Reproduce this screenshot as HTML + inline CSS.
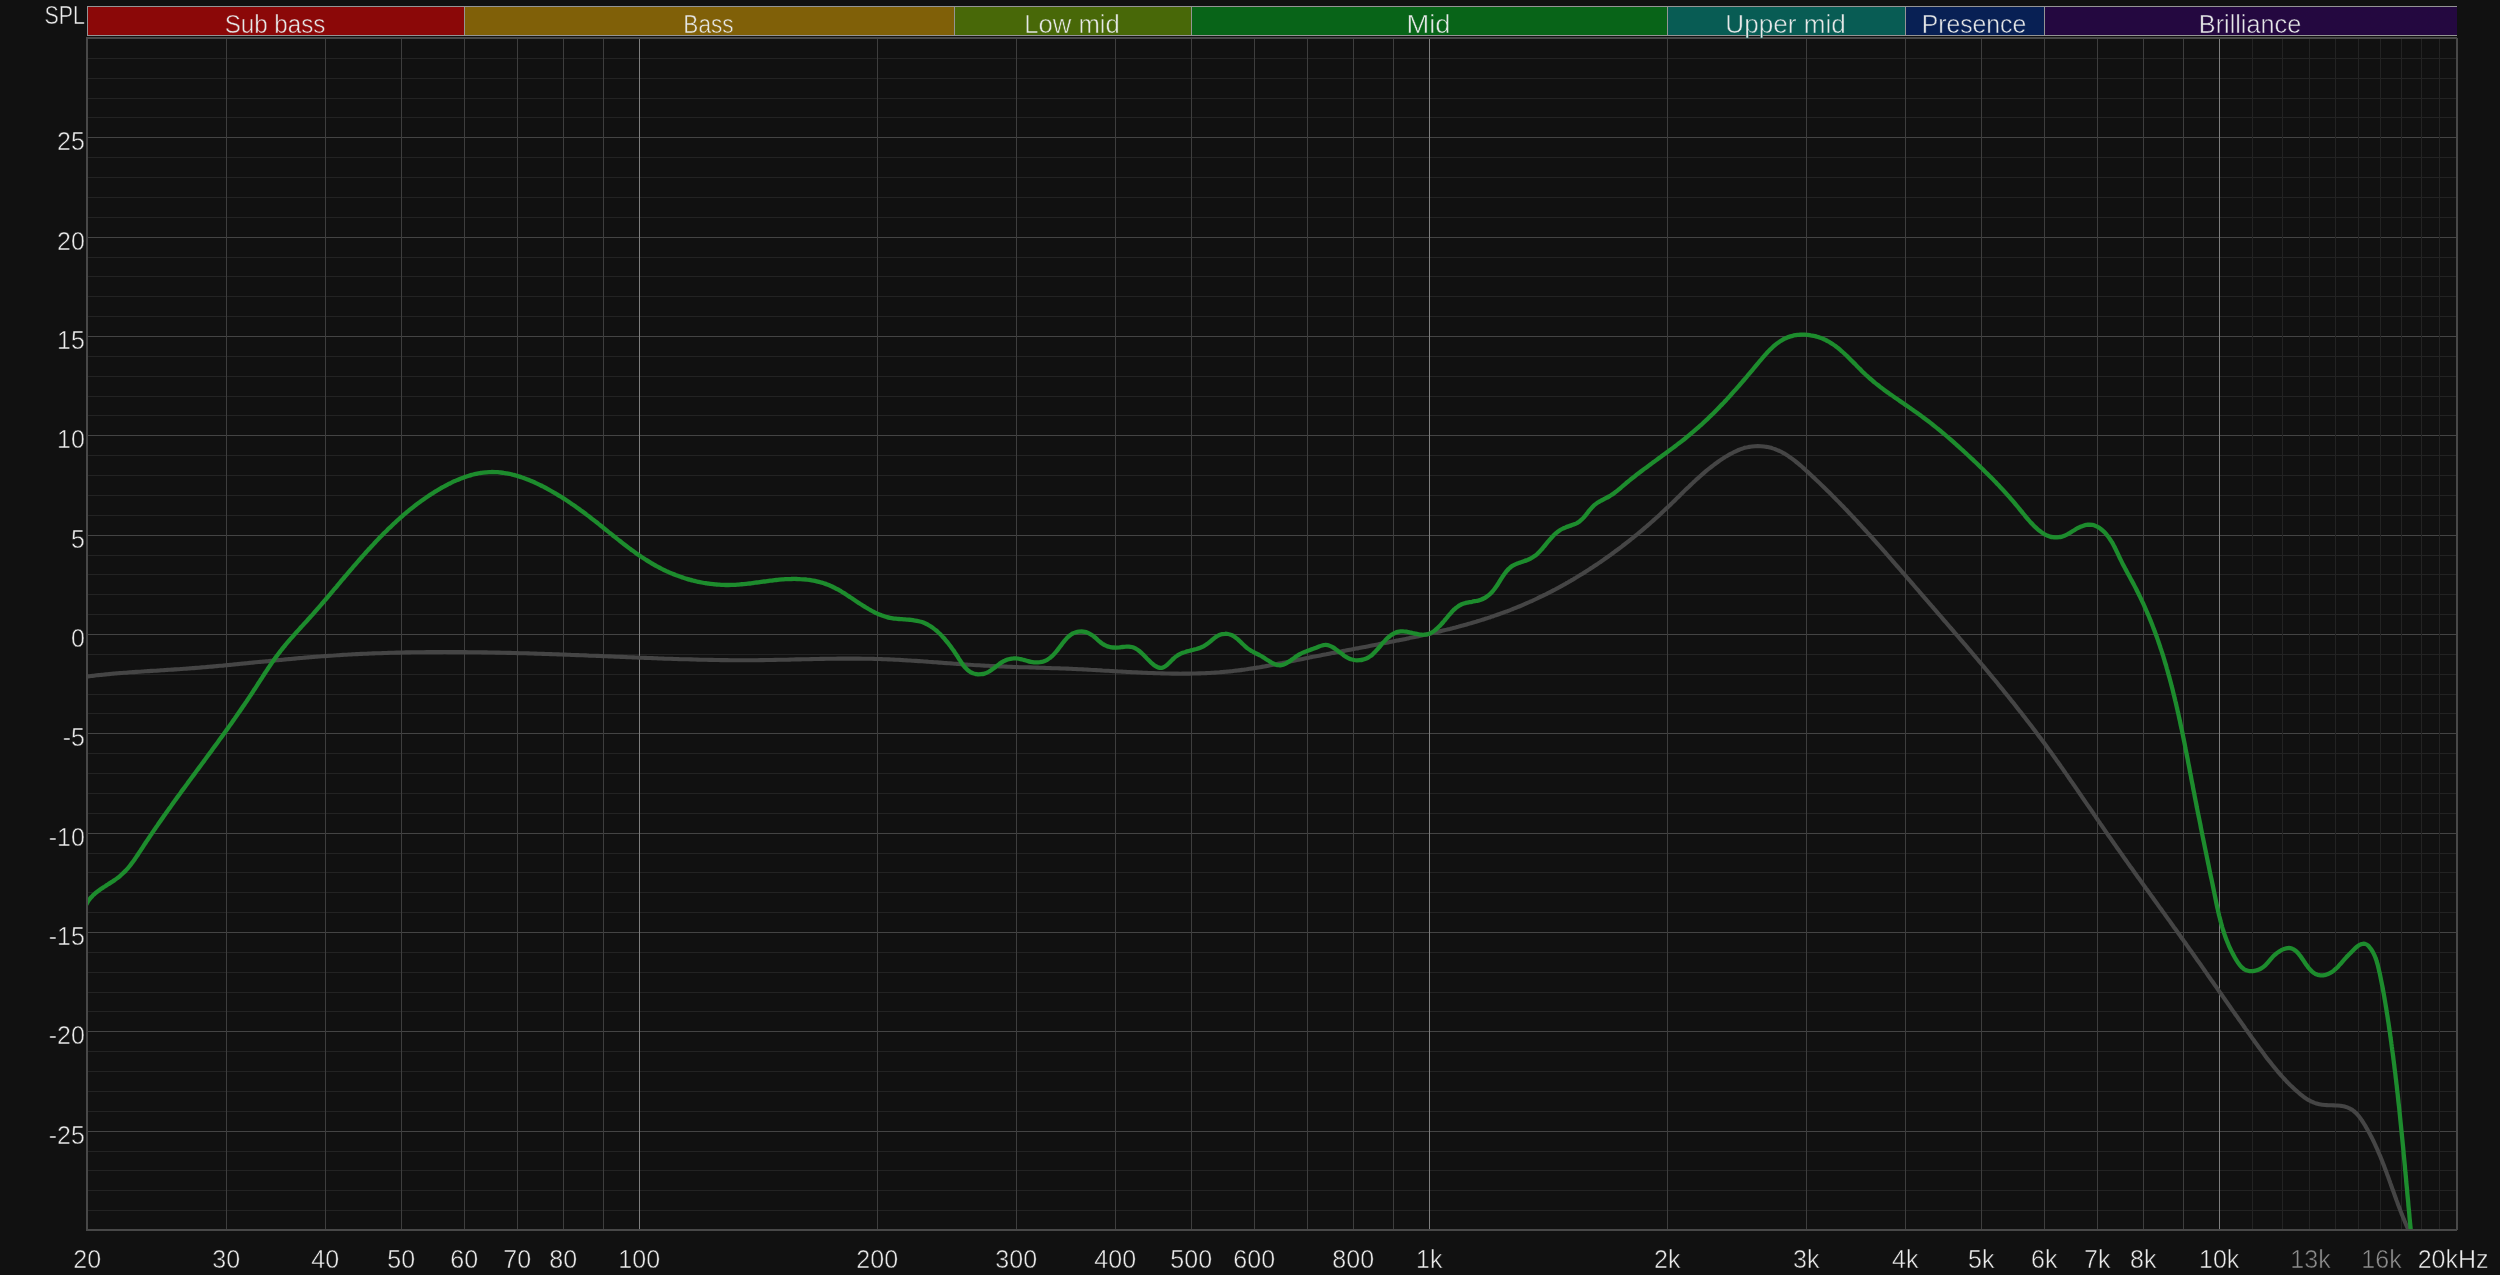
<!DOCTYPE html>
<html lang="en"><head><meta charset="utf-8"><title>SPL frequency response</title>
<style>html,body{margin:0;padding:0;background:#111111;width:2500px;height:1275px}svg{display:block;will-change:transform}text{font-family:"Liberation Sans",sans-serif}</style>
</head><body>
<svg width="2500" height="1275" viewBox="0 0 2500 1275">
<rect x="0" y="0" width="2500" height="1275" fill="#111111"/>
<g shape-rendering="crispEdges">
<rect x="87" y="7" width="377" height="28" fill="#8b0808"/>
<rect x="464" y="7" width="490" height="28" fill="#806008"/>
<rect x="954" y="7" width="237" height="28" fill="#486808"/>
<rect x="1191" y="7" width="476" height="28" fill="#086418"/>
<rect x="1667" y="7" width="238" height="28" fill="#085c54"/>
<rect x="1905" y="7" width="139" height="28" fill="#082054"/>
<rect x="2044" y="7" width="413" height="28" fill="#240840"/>
<rect x="87" y="6" width="2370" height="1" fill="#949494"/>
<rect x="87" y="35" width="2370" height="1" fill="#949494"/>
<rect x="87" y="6" width="1" height="30" fill="#949494"/>
<rect x="464" y="6" width="1" height="30" fill="#949494"/>
<rect x="954" y="6" width="1" height="30" fill="#949494"/>
<rect x="1191" y="6" width="1" height="30" fill="#949494"/>
<rect x="1667" y="6" width="1" height="30" fill="#949494"/>
<rect x="1905" y="6" width="1" height="30" fill="#949494"/>
<rect x="2044" y="6" width="1" height="30" fill="#949494"/>
</g>
<g shape-rendering="crispEdges">
<rect x="88" y="1210" width="2368" height="1" fill="#232323"/>
<rect x="88" y="1190" width="2368" height="1" fill="#232323"/>
<rect x="88" y="1170" width="2368" height="1" fill="#232323"/>
<rect x="88" y="1151" width="2368" height="1" fill="#232323"/>
<rect x="88" y="1111" width="2368" height="1" fill="#232323"/>
<rect x="88" y="1091" width="2368" height="1" fill="#232323"/>
<rect x="88" y="1071" width="2368" height="1" fill="#232323"/>
<rect x="88" y="1051" width="2368" height="1" fill="#232323"/>
<rect x="88" y="1011" width="2368" height="1" fill="#232323"/>
<rect x="88" y="992" width="2368" height="1" fill="#232323"/>
<rect x="88" y="972" width="2368" height="1" fill="#232323"/>
<rect x="88" y="952" width="2368" height="1" fill="#232323"/>
<rect x="88" y="912" width="2368" height="1" fill="#232323"/>
<rect x="88" y="892" width="2368" height="1" fill="#232323"/>
<rect x="88" y="872" width="2368" height="1" fill="#232323"/>
<rect x="88" y="853" width="2368" height="1" fill="#232323"/>
<rect x="88" y="813" width="2368" height="1" fill="#232323"/>
<rect x="88" y="793" width="2368" height="1" fill="#232323"/>
<rect x="88" y="773" width="2368" height="1" fill="#232323"/>
<rect x="88" y="753" width="2368" height="1" fill="#232323"/>
<rect x="88" y="713" width="2368" height="1" fill="#232323"/>
<rect x="88" y="694" width="2368" height="1" fill="#232323"/>
<rect x="88" y="674" width="2368" height="1" fill="#232323"/>
<rect x="88" y="654" width="2368" height="1" fill="#232323"/>
<rect x="88" y="614" width="2368" height="1" fill="#232323"/>
<rect x="88" y="594" width="2368" height="1" fill="#232323"/>
<rect x="88" y="574" width="2368" height="1" fill="#232323"/>
<rect x="88" y="555" width="2368" height="1" fill="#232323"/>
<rect x="88" y="515" width="2368" height="1" fill="#232323"/>
<rect x="88" y="495" width="2368" height="1" fill="#232323"/>
<rect x="88" y="475" width="2368" height="1" fill="#232323"/>
<rect x="88" y="455" width="2368" height="1" fill="#232323"/>
<rect x="88" y="415" width="2368" height="1" fill="#232323"/>
<rect x="88" y="396" width="2368" height="1" fill="#232323"/>
<rect x="88" y="376" width="2368" height="1" fill="#232323"/>
<rect x="88" y="356" width="2368" height="1" fill="#232323"/>
<rect x="88" y="316" width="2368" height="1" fill="#232323"/>
<rect x="88" y="296" width="2368" height="1" fill="#232323"/>
<rect x="88" y="276" width="2368" height="1" fill="#232323"/>
<rect x="88" y="257" width="2368" height="1" fill="#232323"/>
<rect x="88" y="217" width="2368" height="1" fill="#232323"/>
<rect x="88" y="197" width="2368" height="1" fill="#232323"/>
<rect x="88" y="177" width="2368" height="1" fill="#232323"/>
<rect x="88" y="157" width="2368" height="1" fill="#232323"/>
<rect x="88" y="117" width="2368" height="1" fill="#232323"/>
<rect x="88" y="98" width="2368" height="1" fill="#232323"/>
<rect x="88" y="78" width="2368" height="1" fill="#232323"/>
<rect x="88" y="58" width="2368" height="1" fill="#232323"/>
<rect x="88" y="1131" width="2368" height="1" fill="#444444"/>
<rect x="88" y="1031" width="2368" height="1" fill="#444444"/>
<rect x="88" y="932" width="2368" height="1" fill="#444444"/>
<rect x="88" y="833" width="2368" height="1" fill="#444444"/>
<rect x="88" y="733" width="2368" height="1" fill="#444444"/>
<rect x="88" y="634" width="2368" height="1" fill="#444444"/>
<rect x="88" y="535" width="2368" height="1" fill="#444444"/>
<rect x="88" y="435" width="2368" height="1" fill="#444444"/>
<rect x="88" y="336" width="2368" height="1" fill="#444444"/>
<rect x="88" y="237" width="2368" height="1" fill="#444444"/>
<rect x="88" y="137" width="2368" height="1" fill="#444444"/>
<rect x="2252" y="39" width="1" height="1190" fill="#232323"/>
<rect x="2282" y="39" width="1" height="1190" fill="#232323"/>
<rect x="2309" y="39" width="1" height="1190" fill="#232323"/>
<rect x="2335" y="39" width="1" height="1190" fill="#232323"/>
<rect x="2358" y="39" width="1" height="1190" fill="#232323"/>
<rect x="2380" y="39" width="1" height="1190" fill="#232323"/>
<rect x="2401" y="39" width="1" height="1190" fill="#232323"/>
<rect x="2421" y="39" width="1" height="1190" fill="#232323"/>
<rect x="2439" y="39" width="1" height="1190" fill="#232323"/>
<rect x="226" y="39" width="1" height="1190" fill="#3e3e3e"/>
<rect x="325" y="39" width="1" height="1190" fill="#3e3e3e"/>
<rect x="401" y="39" width="1" height="1190" fill="#3e3e3e"/>
<rect x="464" y="39" width="1" height="1190" fill="#3e3e3e"/>
<rect x="517" y="39" width="1" height="1190" fill="#3e3e3e"/>
<rect x="563" y="39" width="1" height="1190" fill="#3e3e3e"/>
<rect x="603" y="39" width="1" height="1190" fill="#3e3e3e"/>
<rect x="877" y="39" width="1" height="1190" fill="#3e3e3e"/>
<rect x="1016" y="39" width="1" height="1190" fill="#3e3e3e"/>
<rect x="1115" y="39" width="1" height="1190" fill="#3e3e3e"/>
<rect x="1191" y="39" width="1" height="1190" fill="#3e3e3e"/>
<rect x="1254" y="39" width="1" height="1190" fill="#3e3e3e"/>
<rect x="1307" y="39" width="1" height="1190" fill="#3e3e3e"/>
<rect x="1353" y="39" width="1" height="1190" fill="#3e3e3e"/>
<rect x="1393" y="39" width="1" height="1190" fill="#3e3e3e"/>
<rect x="1667" y="39" width="1" height="1190" fill="#3e3e3e"/>
<rect x="1806" y="39" width="1" height="1190" fill="#3e3e3e"/>
<rect x="1905" y="39" width="1" height="1190" fill="#3e3e3e"/>
<rect x="1981" y="39" width="1" height="1190" fill="#3e3e3e"/>
<rect x="2044" y="39" width="1" height="1190" fill="#3e3e3e"/>
<rect x="2097" y="39" width="1" height="1190" fill="#3e3e3e"/>
<rect x="2143" y="39" width="1" height="1190" fill="#3e3e3e"/>
<rect x="2183" y="39" width="1" height="1190" fill="#3e3e3e"/>
<rect x="639" y="39" width="1" height="1190" fill="#7e7e7e"/>
<rect x="1429" y="39" width="1" height="1190" fill="#7e7e7e"/>
<rect x="2219" y="39" width="1" height="1190" fill="#7e7e7e"/>
</g>
<defs><clipPath id="plotclip"><rect x="88" y="39" width="2368" height="1190"/></clipPath></defs>
<g clip-path="url(#plotclip)" fill="none" stroke-linejoin="round" stroke-linecap="round">
<path d="M82.0 677.2C82.5 677.1 84.0 676.9 85.0 676.8C86.0 676.6 87.0 676.5 88.0 676.4C89.0 676.3 90.0 676.1 91.0 676.0C92.0 675.9 93.0 675.8 94.0 675.7C95.0 675.5 96.0 675.4 96.9 675.3C97.9 675.2 98.9 675.1 99.9 675.0C100.9 674.9 101.9 674.8 102.9 674.7C103.9 674.6 104.9 674.5 105.9 674.4C106.9 674.3 107.9 674.2 108.9 674.1C109.9 674.0 110.9 673.9 111.9 673.8C112.9 673.7 113.9 673.6 114.9 673.5C115.9 673.4 116.9 673.4 117.9 673.3C118.9 673.2 119.9 673.1 120.9 673.0C121.9 673.0 122.9 672.9 123.9 672.8C124.9 672.7 125.9 672.6 126.9 672.6C127.9 672.5 128.9 672.4 129.9 672.3C130.9 672.3 131.9 672.2 132.9 672.1C133.9 672.1 134.9 672.0 135.9 671.9C136.9 671.9 137.9 671.8 138.9 671.7C139.9 671.7 140.9 671.6 141.9 671.5C142.9 671.5 143.9 671.4 144.9 671.3C145.9 671.3 146.9 671.2 147.9 671.1C148.9 671.1 149.9 671.0 150.9 670.9C151.9 670.9 152.9 670.8 153.9 670.8C154.9 670.7 155.9 670.6 156.8 670.6C157.8 670.5 158.8 670.4 159.8 670.4C160.8 670.3 161.8 670.3 162.8 670.2C163.8 670.1 164.8 670.1 165.8 670.0C166.8 669.9 167.8 669.9 168.8 669.8C169.8 669.8 170.8 669.7 171.8 669.6C172.8 669.6 173.8 669.5 174.8 669.4C175.8 669.4 176.8 669.3 177.8 669.2C178.8 669.2 179.8 669.1 180.8 669.0C181.8 669.0 182.8 668.9 183.8 668.8C184.8 668.7 185.8 668.7 186.8 668.6C187.8 668.5 188.8 668.5 189.8 668.4C190.8 668.3 191.8 668.2 192.8 668.1C193.8 668.1 194.8 668.0 195.8 667.9C196.8 667.8 197.8 667.7 198.8 667.7C199.8 667.6 200.8 667.5 201.8 667.4C202.8 667.3 203.8 667.3 204.8 667.2C205.8 667.1 206.8 667.0 207.8 666.9C208.8 666.8 209.8 666.7 210.8 666.6C211.8 666.6 212.8 666.5 213.8 666.4C214.8 666.3 215.8 666.2 216.8 666.1C217.8 666.0 218.8 665.9 219.8 665.8C220.8 665.7 221.8 665.6 222.8 665.6C223.8 665.5 224.8 665.4 225.8 665.3C226.8 665.2 227.8 665.1 228.8 665.0C229.8 664.9 230.7 664.8 231.7 664.7C232.7 664.6 233.7 664.5 234.7 664.4C235.7 664.3 236.7 664.2 237.7 664.1C238.7 664.0 239.7 663.9 240.7 663.8C241.7 663.7 242.7 663.6 243.7 663.5C244.7 663.4 245.7 663.3 246.7 663.2C247.7 663.1 248.7 663.0 249.7 662.9C250.7 662.8 251.7 662.7 252.7 662.6C253.7 662.5 254.7 662.4 255.7 662.3C256.7 662.2 257.7 662.1 258.7 662.0C259.7 661.9 260.7 661.8 261.7 661.7C262.7 661.6 263.7 661.6 264.7 661.5C265.7 661.4 266.7 661.3 267.7 661.2C268.7 661.1 269.7 661.0 270.7 660.9C271.7 660.8 272.7 660.7 273.7 660.6C274.7 660.5 275.7 660.4 276.7 660.3C277.7 660.2 278.7 660.1 279.7 660.0C280.7 659.9 281.7 659.8 282.7 659.7C283.7 659.6 284.7 659.5 285.7 659.4C286.7 659.3 287.6 659.2 288.6 659.1C289.6 659.0 290.6 658.9 291.6 658.9C292.6 658.8 293.6 658.7 294.6 658.6C295.6 658.5 296.6 658.4 297.6 658.3C298.6 658.2 299.6 658.1 300.6 658.0C301.6 658.0 302.6 657.9 303.6 657.8C304.6 657.7 305.6 657.6 306.6 657.5C307.6 657.4 308.6 657.4 309.6 657.3C310.6 657.2 311.6 657.1 312.6 657.0C313.6 656.9 314.6 656.9 315.6 656.8C316.6 656.7 317.6 656.6 318.6 656.5C319.6 656.5 320.6 656.4 321.6 656.3C322.6 656.2 323.6 656.2 324.6 656.1C325.6 656.0 326.6 655.9 327.6 655.9C328.6 655.8 329.6 655.7 330.6 655.7C331.6 655.6 332.6 655.5 333.6 655.5C334.6 655.4 335.6 655.3 336.6 655.3C337.6 655.2 338.6 655.1 339.6 655.1C340.6 655.0 341.6 655.0 342.6 654.9C343.6 654.8 344.6 654.8 345.6 654.7C346.6 654.7 347.6 654.6 348.6 654.5C349.6 654.5 350.6 654.4 351.6 654.4C352.6 654.3 353.6 654.3 354.6 654.2C355.6 654.2 356.6 654.1 357.6 654.1C358.6 654.0 359.6 654.0 360.6 653.9C361.6 653.9 362.6 653.8 363.6 653.8C364.6 653.7 365.6 653.7 366.6 653.7C367.6 653.6 368.6 653.6 369.6 653.5C370.6 653.5 371.6 653.4 372.6 653.4C373.6 653.4 374.6 653.3 375.6 653.3C376.6 653.2 377.6 653.2 378.6 653.2C379.6 653.1 380.6 653.1 381.6 653.1C382.6 653.0 383.6 653.0 384.6 653.0C385.6 652.9 386.6 652.9 387.6 652.9C388.6 652.8 389.6 652.8 390.6 652.8C391.6 652.8 392.6 652.7 393.6 652.7C394.6 652.7 395.6 652.7 396.6 652.6C397.6 652.6 398.6 652.6 399.6 652.6C400.6 652.5 401.6 652.5 402.6 652.5C403.6 652.5 404.6 652.4 405.6 652.4C406.6 652.4 407.6 652.4 408.6 652.4C409.6 652.4 410.6 652.3 411.6 652.3C412.6 652.3 413.6 652.3 414.6 652.3C415.6 652.3 416.6 652.2 417.6 652.2C418.6 652.2 419.6 652.2 420.6 652.2C421.6 652.2 422.6 652.2 423.6 652.2C424.6 652.1 425.6 652.1 426.6 652.1C427.7 652.1 428.7 652.1 429.7 652.1C430.7 652.1 431.7 652.1 432.7 652.1C433.7 652.1 434.7 652.1 435.7 652.1C436.7 652.1 437.7 652.1 438.7 652.1C439.7 652.1 440.7 652.1 441.7 652.1C442.7 652.0 443.7 652.0 444.7 652.0C445.7 652.0 446.7 652.0 447.7 652.1C448.7 652.1 449.7 652.1 450.7 652.1C451.7 652.1 452.7 652.1 453.7 652.1C454.7 652.1 455.7 652.1 456.7 652.1C457.7 652.1 458.7 652.1 459.7 652.1C460.7 652.1 461.7 652.1 462.7 652.1C463.7 652.1 464.7 652.1 465.7 652.1C466.7 652.2 467.7 652.2 468.7 652.2C469.7 652.2 470.7 652.2 471.7 652.2C472.7 652.2 473.7 652.2 474.7 652.2C475.7 652.3 476.7 652.3 477.7 652.3C478.7 652.3 479.7 652.3 480.7 652.3C481.7 652.3 482.7 652.4 483.7 652.4C484.7 652.4 485.7 652.4 486.8 652.4C487.8 652.4 488.8 652.5 489.8 652.5C490.8 652.5 491.8 652.5 492.8 652.5C493.8 652.5 494.8 652.6 495.8 652.6C496.8 652.6 497.8 652.6 498.8 652.6C499.8 652.7 500.8 652.7 501.8 652.7C502.8 652.7 503.8 652.8 504.8 652.8C505.8 652.8 506.8 652.8 507.8 652.9C508.8 652.9 509.8 652.9 510.8 652.9C511.8 652.9 512.8 653.0 513.8 653.0C514.8 653.0 515.8 653.1 516.8 653.1C517.8 653.1 518.8 653.1 519.8 653.2C520.8 653.2 521.8 653.2 522.8 653.2C523.8 653.3 524.8 653.3 525.8 653.3C526.8 653.4 527.8 653.4 528.8 653.4C529.8 653.4 530.8 653.5 531.8 653.5C532.8 653.5 533.8 653.6 534.8 653.6C535.8 653.6 536.8 653.7 537.9 653.7C538.9 653.7 539.9 653.8 540.9 653.8C541.9 653.8 542.9 653.9 543.9 653.9C544.9 653.9 545.9 654.0 546.9 654.0C547.9 654.0 548.9 654.1 549.9 654.1C550.9 654.1 551.9 654.2 552.9 654.2C553.9 654.2 554.9 654.3 555.9 654.3C556.9 654.3 557.9 654.4 558.9 654.4C559.9 654.4 560.9 654.5 561.9 654.5C562.9 654.6 563.9 654.6 564.9 654.6C565.9 654.7 566.9 654.7 567.9 654.7C568.9 654.8 569.9 654.8 570.9 654.9C571.9 654.9 572.9 654.9 573.9 655.0C574.9 655.0 575.9 655.0 576.9 655.1C577.9 655.1 578.9 655.2 579.9 655.2C580.9 655.2 581.9 655.3 582.9 655.3C583.9 655.4 584.9 655.4 585.9 655.4C586.9 655.5 587.9 655.5 588.9 655.6C589.9 655.6 591.0 655.6 592.0 655.7C593.0 655.7 594.0 655.8 595.0 655.8C596.0 655.8 597.0 655.9 598.0 655.9C599.0 656.0 600.0 656.0 601.0 656.0C602.0 656.1 603.0 656.1 604.0 656.2C605.0 656.2 606.0 656.2 607.0 656.3C608.0 656.3 609.0 656.4 610.0 656.4C611.0 656.5 612.0 656.5 613.0 656.5C614.0 656.6 615.0 656.6 616.0 656.7C617.0 656.7 618.0 656.7 619.0 656.8C620.0 656.8 621.0 656.9 622.0 656.9C623.0 657.0 624.0 657.0 625.0 657.0C626.0 657.1 627.0 657.1 628.0 657.2C629.0 657.2 630.0 657.2 631.0 657.3C632.0 657.3 633.0 657.4 634.0 657.4C635.0 657.4 636.0 657.5 637.0 657.5C638.0 657.6 639.0 657.6 640.0 657.7C641.0 657.7 642.0 657.7 643.0 657.8C644.0 657.8 645.0 657.9 646.0 657.9C647.0 657.9 648.0 658.0 649.0 658.0C650.0 658.0 651.0 658.1 652.0 658.1C653.0 658.2 654.0 658.2 655.0 658.2C656.0 658.3 657.0 658.3 658.0 658.4C659.0 658.4 660.0 658.4 661.0 658.5C662.0 658.5 663.0 658.5 664.1 658.6C665.1 658.6 666.1 658.6 667.1 658.7C668.1 658.7 669.1 658.7 670.1 658.8C671.1 658.8 672.1 658.8 673.1 658.9C674.1 658.9 675.1 658.9 676.1 659.0C677.1 659.0 678.1 659.0 679.1 659.1C680.1 659.1 681.1 659.1 682.1 659.2C683.1 659.2 684.1 659.2 685.1 659.3C686.1 659.3 687.1 659.3 688.1 659.3C689.1 659.4 690.1 659.4 691.1 659.4C692.1 659.5 693.1 659.5 694.1 659.5C695.1 659.5 696.1 659.6 697.1 659.6C698.1 659.6 699.1 659.6 700.1 659.7C701.1 659.7 702.1 659.7 703.1 659.7C704.1 659.7 705.1 659.8 706.1 659.8C707.1 659.8 708.1 659.8 709.1 659.9C710.1 659.9 711.1 659.9 712.1 659.9C713.1 659.9 714.1 659.9 715.1 660.0C716.1 660.0 717.1 660.0 718.1 660.0C719.1 660.0 720.1 660.0 721.1 660.1C722.1 660.1 723.1 660.1 724.1 660.1C725.1 660.1 726.1 660.1 727.1 660.1C728.1 660.1 729.1 660.1 730.1 660.2C731.1 660.2 732.1 660.2 733.1 660.2C734.1 660.2 735.1 660.2 736.1 660.2C737.1 660.2 738.1 660.2 739.1 660.2C740.1 660.2 741.1 660.2 742.1 660.2C743.1 660.2 744.1 660.2 745.2 660.2C746.2 660.2 747.2 660.2 748.2 660.2C749.2 660.2 750.2 660.2 751.2 660.2C752.2 660.2 753.2 660.2 754.2 660.2C755.2 660.2 756.2 660.2 757.2 660.2C758.2 660.1 759.2 660.1 760.2 660.1C761.2 660.1 762.2 660.1 763.2 660.1C764.2 660.1 765.2 660.1 766.2 660.0C767.2 660.0 768.2 660.0 769.2 660.0C770.2 660.0 771.2 660.0 772.2 660.0C773.2 659.9 774.2 659.9 775.2 659.9C776.2 659.9 777.2 659.9 778.2 659.8C779.2 659.8 780.2 659.8 781.2 659.8C782.2 659.8 783.2 659.7 784.2 659.7C785.2 659.7 786.2 659.7 787.2 659.7C788.2 659.6 789.2 659.6 790.2 659.6C791.2 659.6 792.2 659.5 793.2 659.5C794.2 659.5 795.2 659.5 796.2 659.4C797.2 659.4 798.2 659.4 799.2 659.4C800.2 659.4 801.2 659.3 802.2 659.3C803.3 659.3 804.3 659.3 805.3 659.2C806.3 659.2 807.3 659.2 808.3 659.2C809.3 659.1 810.3 659.1 811.3 659.1C812.3 659.1 813.3 659.1 814.3 659.0C815.3 659.0 816.3 659.0 817.3 659.0C818.3 659.0 819.3 658.9 820.3 658.9C821.3 658.9 822.3 658.9 823.3 658.9C824.3 658.8 825.3 658.8 826.3 658.8C827.3 658.8 828.3 658.8 829.3 658.8C830.3 658.7 831.3 658.7 832.3 658.7C833.3 658.7 834.3 658.7 835.3 658.7C836.3 658.7 837.3 658.7 838.3 658.6C839.3 658.6 840.3 658.6 841.3 658.6C842.3 658.6 843.3 658.6 844.3 658.6C845.3 658.6 846.3 658.6 847.3 658.6C848.3 658.6 849.3 658.6 850.3 658.6C851.3 658.6 852.3 658.6 853.3 658.6C854.3 658.6 855.3 658.6 856.4 658.6C857.4 658.6 858.4 658.6 859.4 658.6C860.4 658.6 861.4 658.6 862.4 658.7C863.4 658.7 864.4 658.7 865.4 658.7C866.4 658.7 867.4 658.7 868.4 658.7C869.4 658.8 870.4 658.8 871.4 658.8C872.4 658.8 873.4 658.8 874.4 658.9C875.4 658.9 876.4 658.9 877.4 659.0C878.4 659.0 879.4 659.0 880.4 659.0C881.4 659.1 882.4 659.1 883.4 659.2C884.4 659.2 885.4 659.2 886.4 659.3C887.4 659.3 888.4 659.4 889.4 659.4C890.4 659.4 891.4 659.5 892.4 659.5C893.4 659.6 894.4 659.6 895.4 659.7C896.4 659.7 897.4 659.8 898.4 659.8C899.4 659.9 900.4 659.9 901.4 660.0C902.4 660.1 903.4 660.1 904.4 660.2C905.4 660.2 906.4 660.3 907.4 660.4C908.4 660.4 909.4 660.5 910.4 660.5C911.4 660.6 912.4 660.7 913.4 660.7C914.4 660.8 915.4 660.9 916.4 660.9C917.4 661.0 918.4 661.1 919.4 661.1C920.4 661.2 921.4 661.3 922.4 661.3C923.4 661.4 924.4 661.5 925.4 661.5C926.4 661.6 927.4 661.7 928.4 661.8C929.4 661.8 930.4 661.9 931.4 662.0C932.4 662.1 933.4 662.1 934.4 662.2C935.4 662.3 936.4 662.3 937.4 662.4C938.4 662.5 939.4 662.6 940.4 662.6C941.4 662.7 942.4 662.8 943.4 662.9C944.5 662.9 945.5 663.0 946.5 663.1C947.5 663.2 948.5 663.2 949.5 663.3C950.5 663.4 951.5 663.4 952.5 663.5C953.5 663.6 954.5 663.7 955.5 663.7C956.5 663.8 957.5 663.9 958.5 664.0C959.5 664.0 960.5 664.1 961.5 664.2C962.5 664.2 963.5 664.3 964.5 664.4C965.5 664.4 966.5 664.5 967.5 664.6C968.5 664.6 969.5 664.7 970.5 664.8C971.5 664.8 972.5 664.9 973.5 665.0C974.5 665.0 975.5 665.1 976.5 665.2C977.5 665.2 978.5 665.3 979.5 665.3C980.5 665.4 981.5 665.5 982.5 665.5C983.5 665.6 984.5 665.6 985.5 665.7C986.5 665.7 987.5 665.8 988.5 665.8C989.5 665.9 990.5 666.0 991.5 666.0C992.5 666.1 993.5 666.1 994.5 666.1C995.5 666.2 996.5 666.2 997.5 666.3C998.5 666.3 999.5 666.4 1000.5 666.4C1001.4 666.5 1002.4 666.5 1003.4 666.5C1004.4 666.6 1005.4 666.6 1006.4 666.6C1007.4 666.7 1008.4 666.7 1009.4 666.8C1010.4 666.8 1011.4 666.8 1012.4 666.9C1013.4 666.9 1014.4 666.9 1015.4 667.0C1016.4 667.0 1017.4 667.0 1018.4 667.1C1019.4 667.1 1020.4 667.1 1021.4 667.2C1022.4 667.2 1023.4 667.2 1024.4 667.2C1025.4 667.3 1026.4 667.3 1027.4 667.3C1028.4 667.4 1029.4 667.4 1030.4 667.4C1031.4 667.5 1032.4 667.5 1033.4 667.5C1034.4 667.5 1035.4 667.6 1036.4 667.6C1037.4 667.6 1038.4 667.7 1039.4 667.7C1040.4 667.7 1041.4 667.7 1042.4 667.8C1043.4 667.8 1044.4 667.8 1045.4 667.9C1046.4 667.9 1047.4 667.9 1048.4 668.0C1049.4 668.0 1050.4 668.0 1051.4 668.1C1052.4 668.1 1053.4 668.1 1054.4 668.2C1055.4 668.2 1056.4 668.2 1057.4 668.3C1058.4 668.3 1059.4 668.3 1060.4 668.4C1061.4 668.4 1062.4 668.4 1063.4 668.5C1064.4 668.5 1065.5 668.6 1066.5 668.6C1067.5 668.6 1068.5 668.7 1069.5 668.7C1070.5 668.8 1071.5 668.8 1072.5 668.9C1073.5 668.9 1074.5 669.0 1075.5 669.0C1076.5 669.1 1077.5 669.1 1078.5 669.2C1079.5 669.2 1080.5 669.3 1081.5 669.3C1082.5 669.4 1083.5 669.4 1084.5 669.5C1085.5 669.5 1086.5 669.6 1087.5 669.6C1088.5 669.7 1089.5 669.7 1090.5 669.8C1091.5 669.8 1092.5 669.9 1093.5 670.0C1094.5 670.0 1095.5 670.1 1096.5 670.1C1097.5 670.2 1098.5 670.2 1099.5 670.3C1100.5 670.4 1101.5 670.4 1102.5 670.5C1103.5 670.5 1104.5 670.6 1105.5 670.7C1106.5 670.7 1107.5 670.8 1108.5 670.8C1109.5 670.9 1110.5 671.0 1111.5 671.0C1112.6 671.1 1113.6 671.1 1114.6 671.2C1115.6 671.2 1116.6 671.3 1117.6 671.4C1118.6 671.4 1119.6 671.5 1120.6 671.5C1121.6 671.6 1122.6 671.6 1123.6 671.7C1124.6 671.8 1125.6 671.8 1126.6 671.9C1127.6 671.9 1128.6 672.0 1129.6 672.0C1130.6 672.1 1131.6 672.1 1132.6 672.2C1133.6 672.2 1134.6 672.3 1135.6 672.3C1136.6 672.4 1137.6 672.4 1138.6 672.5C1139.6 672.5 1140.6 672.6 1141.6 672.6C1142.6 672.7 1143.6 672.7 1144.6 672.8C1145.6 672.8 1146.6 672.8 1147.6 672.9C1148.6 672.9 1149.6 673.0 1150.7 673.0C1151.7 673.0 1152.7 673.1 1153.7 673.1C1154.7 673.2 1155.7 673.2 1156.7 673.2C1157.7 673.3 1158.7 673.3 1159.7 673.3C1160.7 673.3 1161.7 673.4 1162.7 673.4C1163.7 673.4 1164.7 673.4 1165.7 673.5C1166.7 673.5 1167.7 673.5 1168.7 673.5C1169.7 673.6 1170.7 673.6 1171.7 673.6C1172.7 673.6 1173.7 673.6 1174.7 673.6C1175.7 673.6 1176.7 673.6 1177.7 673.6C1178.7 673.6 1179.7 673.6 1180.7 673.7C1181.7 673.7 1182.7 673.6 1183.7 673.6C1184.7 673.6 1185.7 673.6 1186.7 673.6C1187.7 673.6 1188.7 673.6 1189.7 673.6C1190.7 673.6 1191.7 673.6 1192.7 673.5C1193.7 673.5 1194.7 673.5 1195.7 673.5C1196.7 673.4 1197.7 673.4 1198.7 673.4C1199.7 673.4 1200.7 673.3 1201.7 673.3C1202.7 673.3 1203.7 673.2 1204.7 673.2C1205.7 673.1 1206.7 673.1 1207.7 673.0C1208.7 673.0 1209.7 672.9 1210.7 672.9C1211.7 672.8 1212.7 672.8 1213.6 672.7C1214.6 672.6 1215.6 672.6 1216.6 672.5C1217.6 672.4 1218.6 672.3 1219.6 672.3C1220.6 672.2 1221.6 672.1 1222.6 672.0C1223.6 671.9 1224.6 671.9 1225.6 671.8C1226.6 671.7 1227.6 671.6 1228.6 671.5C1229.6 671.4 1230.6 671.3 1231.6 671.2C1232.6 671.1 1233.6 670.9 1234.6 670.8C1235.6 670.7 1236.5 670.6 1237.5 670.5C1238.5 670.3 1239.5 670.2 1240.5 670.1C1241.5 670.0 1242.5 669.8 1243.5 669.7C1244.5 669.6 1245.5 669.4 1246.5 669.3C1247.5 669.1 1248.5 669.0 1249.5 668.8C1250.4 668.7 1251.4 668.5 1252.4 668.4C1253.4 668.2 1254.4 668.1 1255.4 667.9C1256.4 667.7 1257.4 667.6 1258.4 667.4C1259.4 667.2 1260.4 667.1 1261.3 666.9C1262.3 666.7 1263.3 666.6 1264.3 666.4C1265.3 666.2 1266.3 666.0 1267.3 665.9C1268.3 665.7 1269.3 665.5 1270.3 665.3C1271.2 665.1 1272.2 664.9 1273.2 664.8C1274.2 664.6 1275.2 664.4 1276.2 664.2C1277.2 664.0 1278.2 663.8 1279.1 663.6C1280.1 663.4 1281.1 663.2 1282.1 663.1C1283.1 662.9 1284.1 662.7 1285.1 662.5C1286.1 662.3 1287.0 662.1 1288.0 661.9C1289.0 661.7 1290.0 661.5 1291.0 661.3C1292.0 661.1 1293.0 660.9 1293.9 660.7C1294.9 660.5 1295.9 660.3 1296.9 660.1C1297.9 659.9 1298.9 659.7 1299.8 659.5C1300.8 659.3 1301.8 659.1 1302.8 658.9C1303.8 658.7 1304.8 658.5 1305.7 658.3C1306.7 658.1 1307.7 657.9 1308.7 657.7C1309.7 657.5 1310.7 657.3 1311.6 657.1C1312.6 657.0 1313.6 656.8 1314.6 656.6C1315.6 656.4 1316.5 656.2 1317.5 656.0C1318.5 655.8 1319.5 655.6 1320.5 655.4C1321.5 655.2 1322.4 655.0 1323.4 654.8C1324.4 654.6 1325.4 654.4 1326.4 654.3C1327.3 654.1 1328.3 653.9 1329.3 653.7C1330.3 653.5 1331.3 653.3 1332.2 653.1C1333.2 652.9 1334.2 652.7 1335.2 652.6C1336.2 652.4 1337.1 652.2 1338.1 652.0C1339.1 651.8 1340.1 651.6 1341.1 651.4C1342.0 651.2 1343.0 651.0 1344.0 650.9C1345.0 650.7 1346.0 650.5 1346.9 650.3C1347.9 650.1 1348.9 649.9 1349.9 649.7C1350.9 649.5 1351.8 649.4 1352.8 649.2C1353.8 649.0 1354.8 648.8 1355.8 648.6C1356.7 648.4 1357.7 648.2 1358.7 648.1C1359.7 647.9 1360.7 647.7 1361.6 647.5C1362.6 647.3 1363.6 647.1 1364.6 646.9C1365.6 646.7 1366.5 646.6 1367.5 646.4C1368.5 646.2 1369.5 646.0 1370.5 645.8C1371.5 645.6 1372.4 645.4 1373.4 645.2C1374.4 645.1 1375.4 644.9 1376.4 644.7C1377.4 644.5 1378.3 644.3 1379.3 644.1C1380.3 643.9 1381.3 643.7 1382.3 643.5C1383.3 643.4 1384.2 643.2 1385.2 643.0C1386.2 642.8 1387.2 642.6 1388.2 642.4C1389.2 642.2 1390.1 642.0 1391.1 641.8C1392.1 641.6 1393.1 641.4 1394.1 641.2C1395.1 641.0 1396.1 640.8 1397.0 640.6C1398.0 640.4 1399.0 640.3 1400.0 640.1C1401.0 639.9 1402.0 639.7 1402.9 639.5C1403.9 639.3 1404.9 639.1 1405.9 638.9C1406.9 638.7 1407.9 638.4 1408.9 638.2C1409.8 638.0 1410.8 637.8 1411.8 637.6C1412.8 637.4 1413.8 637.2 1414.8 637.0C1415.7 636.8 1416.7 636.6 1417.7 636.4C1418.7 636.2 1419.7 636.0 1420.6 635.7C1421.6 635.5 1422.6 635.3 1423.6 635.1C1424.6 634.9 1425.6 634.7 1426.5 634.4C1427.5 634.2 1428.5 634.0 1429.5 633.8C1430.5 633.6 1431.4 633.3 1432.4 633.1C1433.4 632.9 1434.4 632.7 1435.4 632.4C1436.3 632.2 1437.3 632.0 1438.3 631.7C1439.3 631.5 1440.2 631.3 1441.2 631.0C1442.2 630.8 1443.2 630.6 1444.1 630.3C1445.1 630.1 1446.1 629.9 1447.1 629.6C1448.0 629.4 1449.0 629.1 1450.0 628.9C1451.0 628.6 1451.9 628.4 1452.9 628.1C1453.9 627.9 1454.8 627.6 1455.8 627.4C1456.8 627.1 1457.8 626.9 1458.7 626.6C1459.7 626.4 1460.7 626.1 1461.6 625.8C1462.6 625.6 1463.6 625.3 1464.5 625.0C1465.5 624.8 1466.5 624.5 1467.4 624.2C1468.4 623.9 1469.4 623.7 1470.3 623.4C1471.3 623.1 1472.2 622.8 1473.2 622.5C1474.2 622.3 1475.1 622.0 1476.1 621.7C1477.0 621.4 1478.0 621.1 1479.0 620.8C1479.9 620.5 1480.9 620.2 1481.8 619.9C1482.8 619.6 1483.7 619.3 1484.7 619.0C1485.6 618.7 1486.6 618.4 1487.5 618.1C1488.5 617.8 1489.4 617.5 1490.4 617.2C1491.3 616.9 1492.3 616.5 1493.2 616.2C1494.2 615.9 1495.1 615.6 1496.1 615.2C1497.0 614.9 1498.0 614.6 1498.9 614.2C1499.9 613.9 1500.8 613.6 1501.7 613.2C1502.7 612.9 1503.6 612.6 1504.5 612.2C1505.5 611.9 1506.4 611.5 1507.4 611.2C1508.3 610.8 1509.2 610.4 1510.2 610.1C1511.1 609.7 1512.0 609.4 1513.0 609.0C1513.9 608.6 1514.8 608.3 1515.7 607.9C1516.7 607.5 1517.6 607.1 1518.5 606.7C1519.4 606.4 1520.4 606.0 1521.3 605.6C1522.2 605.2 1523.1 604.8 1524.0 604.4C1525.0 604.0 1525.9 603.6 1526.8 603.2C1527.7 602.8 1528.6 602.4 1529.5 602.0C1530.4 601.6 1531.4 601.2 1532.3 600.8C1533.2 600.3 1534.1 599.9 1535.0 599.5C1535.9 599.1 1536.8 598.7 1537.7 598.2C1538.6 597.8 1539.5 597.4 1540.4 596.9C1541.3 596.5 1542.2 596.1 1543.1 595.6C1544.0 595.2 1544.9 594.7 1545.8 594.3C1546.7 593.8 1547.6 593.4 1548.5 592.9C1549.4 592.5 1550.3 592.0 1551.2 591.5C1552.1 591.1 1552.9 590.6 1553.8 590.2C1554.7 589.7 1555.6 589.2 1556.5 588.7C1557.4 588.3 1558.2 587.8 1559.1 587.3C1560.0 586.8 1560.9 586.4 1561.8 585.9C1562.6 585.4 1563.5 584.9 1564.4 584.4C1565.3 583.9 1566.1 583.4 1567.0 582.9C1567.9 582.4 1568.7 581.9 1569.6 581.4C1570.5 580.9 1571.3 580.4 1572.2 579.9C1573.1 579.4 1573.9 578.9 1574.8 578.4C1575.7 577.9 1576.5 577.3 1577.4 576.8C1578.2 576.3 1579.1 575.8 1579.9 575.3C1580.8 574.7 1581.7 574.2 1582.5 573.7C1583.4 573.1 1584.2 572.6 1585.1 572.1C1585.9 571.5 1586.7 571.0 1587.6 570.5C1588.4 569.9 1589.3 569.4 1590.1 568.8C1591.0 568.3 1591.8 567.7 1592.6 567.2C1593.5 566.6 1594.3 566.1 1595.1 565.5C1596.0 565.0 1596.8 564.4 1597.6 563.9C1598.5 563.3 1599.3 562.7 1600.1 562.2C1601.0 561.6 1601.8 561.0 1602.6 560.5C1603.4 559.9 1604.3 559.3 1605.1 558.7C1605.9 558.2 1606.7 557.6 1607.5 557.0C1608.4 556.4 1609.2 555.8 1610.0 555.3C1610.8 554.7 1611.6 554.1 1612.4 553.5C1613.2 552.9 1614.0 552.3 1614.8 551.7C1615.6 551.1 1616.5 550.5 1617.3 549.9C1618.1 549.3 1618.9 548.7 1619.7 548.1C1620.5 547.5 1621.3 546.9 1622.1 546.3C1622.8 545.7 1623.6 545.1 1624.4 544.5C1625.2 543.9 1626.0 543.3 1626.8 542.6C1627.6 542.0 1628.4 541.4 1629.2 540.8C1630.0 540.2 1630.7 539.5 1631.5 538.9C1632.3 538.3 1633.1 537.7 1633.9 537.0C1634.6 536.4 1635.4 535.8 1636.2 535.1C1637.0 534.5 1637.7 533.9 1638.5 533.2C1639.3 532.6 1640.0 532.0 1640.8 531.3C1641.6 530.7 1642.4 530.0 1643.1 529.4C1643.9 528.7 1644.6 528.1 1645.4 527.4C1646.2 526.8 1646.9 526.1 1647.7 525.5C1648.4 524.8 1649.2 524.2 1649.9 523.5C1650.7 522.8 1651.4 522.2 1652.2 521.5C1652.9 520.9 1653.7 520.2 1654.4 519.5C1655.2 518.8 1655.9 518.2 1656.7 517.5C1657.4 516.8 1658.2 516.2 1658.9 515.5C1659.6 514.8 1660.4 514.1 1661.1 513.4C1661.8 512.8 1662.6 512.1 1663.3 511.4C1664.0 510.7 1664.8 510.0 1665.5 509.3C1666.2 508.6 1667.0 508.0 1667.7 507.3C1668.4 506.6 1669.1 505.9 1669.9 505.2C1670.6 504.5 1671.3 503.8 1672.0 503.1C1672.7 502.4 1673.5 501.7 1674.2 501.0C1674.9 500.3 1675.6 499.6 1676.3 498.9C1677.0 498.2 1677.8 497.5 1678.5 496.8C1679.2 496.1 1679.9 495.4 1680.6 494.6C1681.3 493.9 1682.1 493.2 1682.8 492.5C1683.5 491.8 1684.2 491.1 1684.9 490.4C1685.6 489.7 1686.4 489.0 1687.1 488.3C1687.8 487.6 1688.5 486.9 1689.3 486.3C1690.0 485.6 1690.7 484.9 1691.4 484.2C1692.2 483.5 1692.9 482.8 1693.6 482.1C1694.4 481.4 1695.1 480.8 1695.8 480.1C1696.6 479.4 1697.3 478.7 1698.0 478.1C1698.8 477.4 1699.5 476.7 1700.3 476.1C1701.0 475.4 1701.8 474.7 1702.5 474.1C1703.3 473.4 1704.0 472.8 1704.8 472.1C1705.6 471.5 1706.3 470.8 1707.1 470.2C1707.9 469.6 1708.7 468.9 1709.4 468.3C1710.2 467.7 1711.0 467.1 1711.8 466.5C1712.6 465.9 1713.4 465.2 1714.2 464.6C1715.0 464.0 1715.8 463.5 1716.6 462.9C1717.4 462.3 1718.2 461.7 1719.0 461.1C1719.9 460.6 1720.7 460.0 1721.5 459.4C1722.4 458.9 1723.2 458.3 1724.1 457.8C1724.9 457.2 1725.8 456.7 1726.6 456.2C1727.5 455.7 1728.4 455.1 1729.2 454.6C1730.1 454.1 1731.0 453.7 1731.9 453.2C1732.8 452.7 1733.7 452.3 1734.6 451.8C1735.5 451.4 1736.4 451.0 1737.3 450.6C1738.2 450.2 1739.2 449.8 1740.1 449.4C1741.1 449.1 1742.0 448.7 1743.0 448.4C1743.9 448.1 1744.9 447.8 1745.8 447.6C1746.8 447.3 1747.8 447.1 1748.8 446.9C1749.8 446.8 1750.8 446.6 1751.8 446.5C1752.8 446.4 1753.8 446.3 1754.8 446.2C1755.9 446.1 1756.9 446.1 1757.9 446.1C1758.9 446.1 1759.9 446.1 1760.9 446.2C1762.0 446.3 1763.0 446.4 1764.0 446.5C1765.0 446.6 1766.0 446.8 1767.0 446.9C1767.9 447.1 1768.9 447.3 1769.9 447.6C1770.8 447.8 1771.8 448.1 1772.7 448.4C1773.7 448.7 1774.6 449.0 1775.5 449.3C1776.4 449.7 1777.3 450.1 1778.2 450.5C1779.1 450.8 1780.0 451.3 1780.9 451.7C1781.8 452.1 1782.6 452.6 1783.5 453.1C1784.3 453.6 1785.2 454.1 1786.0 454.6C1786.8 455.1 1787.7 455.6 1788.5 456.2C1789.3 456.7 1790.1 457.3 1790.9 457.9C1791.7 458.5 1792.5 459.1 1793.3 459.7C1794.1 460.3 1794.9 460.9 1795.7 461.5C1796.5 462.1 1797.3 462.8 1798.0 463.4C1798.8 464.1 1799.6 464.7 1800.3 465.4C1801.1 466.0 1801.9 466.7 1802.6 467.4C1803.4 468.1 1804.1 468.7 1804.9 469.4C1805.6 470.1 1806.4 470.8 1807.1 471.5C1807.9 472.1 1808.6 472.8 1809.4 473.5C1810.1 474.2 1810.9 474.9 1811.6 475.6C1812.3 476.3 1813.1 476.9 1813.8 477.6C1814.6 478.3 1815.3 479.0 1816.0 479.7C1816.8 480.4 1817.5 481.1 1818.2 481.8C1819.0 482.5 1819.7 483.2 1820.4 483.9C1821.1 484.6 1821.9 485.3 1822.6 486.0C1823.3 486.7 1824.0 487.4 1824.8 488.1C1825.5 488.8 1826.2 489.5 1826.9 490.2C1827.6 490.9 1828.4 491.6 1829.1 492.3C1829.8 493.0 1830.5 493.7 1831.2 494.4C1831.9 495.2 1832.6 495.9 1833.3 496.6C1834.1 497.3 1834.8 498.0 1835.5 498.7C1836.2 499.4 1836.9 500.2 1837.6 500.9C1838.3 501.6 1839.0 502.3 1839.7 503.0C1840.4 503.7 1841.1 504.5 1841.8 505.2C1842.5 505.9 1843.2 506.6 1843.9 507.3C1844.6 508.1 1845.3 508.8 1846.0 509.5C1846.7 510.2 1847.4 511.0 1848.0 511.7C1848.7 512.4 1849.4 513.1 1850.1 513.9C1850.8 514.6 1851.5 515.3 1852.2 516.1C1852.9 516.8 1853.6 517.5 1854.2 518.3C1854.9 519.0 1855.6 519.7 1856.3 520.4C1857.0 521.2 1857.7 521.9 1858.3 522.7C1859.0 523.4 1859.7 524.1 1860.4 524.9C1861.1 525.6 1861.7 526.3 1862.4 527.1C1863.1 527.8 1863.8 528.5 1864.4 529.3C1865.1 530.0 1865.8 530.8 1866.5 531.5C1867.1 532.2 1867.8 533.0 1868.5 533.7C1869.1 534.5 1869.8 535.2 1870.5 536.0C1871.2 536.7 1871.8 537.4 1872.5 538.2C1873.2 538.9 1873.8 539.7 1874.5 540.4C1875.2 541.2 1875.8 541.9 1876.5 542.7C1877.2 543.4 1877.8 544.1 1878.5 544.9C1879.2 545.6 1879.8 546.4 1880.5 547.1C1881.2 547.9 1881.8 548.6 1882.5 549.4C1883.1 550.1 1883.8 550.9 1884.5 551.6C1885.1 552.4 1885.8 553.1 1886.5 553.9C1887.1 554.6 1887.8 555.4 1888.4 556.1C1889.1 556.9 1889.8 557.6 1890.4 558.4C1891.1 559.1 1891.7 559.9 1892.4 560.7C1893.1 561.4 1893.7 562.2 1894.4 562.9C1895.0 563.7 1895.7 564.4 1896.3 565.2C1897.0 565.9 1897.7 566.7 1898.3 567.4C1899.0 568.2 1899.6 568.9 1900.3 569.7C1900.9 570.5 1901.6 571.2 1902.2 572.0C1902.9 572.7 1903.6 573.5 1904.2 574.2C1904.9 575.0 1905.5 575.8 1906.2 576.5C1906.8 577.3 1907.5 578.0 1908.1 578.8C1908.8 579.5 1909.5 580.3 1910.1 581.0C1910.8 581.8 1911.4 582.6 1912.1 583.3C1912.7 584.1 1913.4 584.8 1914.0 585.6C1914.7 586.3 1915.3 587.1 1916.0 587.9C1916.7 588.6 1917.3 589.4 1918.0 590.1C1918.6 590.9 1919.3 591.6 1919.9 592.4C1920.6 593.2 1921.2 593.9 1921.9 594.7C1922.6 595.4 1923.2 596.2 1923.9 596.9C1924.5 597.7 1925.2 598.5 1925.8 599.2C1926.5 600.0 1927.1 600.7 1927.8 601.5C1928.5 602.2 1929.1 603.0 1929.8 603.8C1930.4 604.5 1931.1 605.3 1931.7 606.0C1932.4 606.8 1933.1 607.5 1933.7 608.3C1934.4 609.1 1935.0 609.8 1935.7 610.6C1936.3 611.3 1937.0 612.1 1937.6 612.8C1938.3 613.6 1939.0 614.4 1939.6 615.1C1940.3 615.9 1940.9 616.6 1941.6 617.4C1942.2 618.1 1942.9 618.9 1943.5 619.7C1944.2 620.4 1944.9 621.2 1945.5 621.9C1946.2 622.7 1946.8 623.5 1947.5 624.2C1948.1 625.0 1948.8 625.7 1949.4 626.5C1950.1 627.3 1950.8 628.0 1951.4 628.8C1952.1 629.5 1952.7 630.3 1953.4 631.0C1954.0 631.8 1954.7 632.6 1955.3 633.3C1956.0 634.1 1956.6 634.8 1957.3 635.6C1957.9 636.4 1958.6 637.1 1959.3 637.9C1959.9 638.7 1960.6 639.4 1961.2 640.2C1961.9 640.9 1962.5 641.7 1963.2 642.5C1963.8 643.2 1964.5 644.0 1965.1 644.7C1965.8 645.5 1966.4 646.3 1967.1 647.0C1967.7 647.8 1968.4 648.6 1969.0 649.3C1969.7 650.1 1970.3 650.9 1971.0 651.6C1971.6 652.4 1972.3 653.1 1972.9 653.9C1973.6 654.7 1974.2 655.4 1974.9 656.2C1975.5 657.0 1976.2 657.7 1976.8 658.5C1977.5 659.3 1978.1 660.0 1978.7 660.8C1979.4 661.6 1980.0 662.3 1980.7 663.1C1981.3 663.9 1982.0 664.6 1982.6 665.4C1983.3 666.2 1983.9 666.9 1984.5 667.7C1985.2 668.5 1985.8 669.3 1986.5 670.0C1987.1 670.8 1987.8 671.6 1988.4 672.3C1989.0 673.1 1989.7 673.9 1990.3 674.6C1991.0 675.4 1991.6 676.2 1992.2 677.0C1992.9 677.7 1993.5 678.5 1994.2 679.3C1994.8 680.1 1995.4 680.8 1996.1 681.6C1996.7 682.4 1997.3 683.1 1998.0 683.9C1998.6 684.7 1999.2 685.5 1999.9 686.2C2000.5 687.0 2001.1 687.8 2001.8 688.6C2002.4 689.4 2003.0 690.1 2003.7 690.9C2004.3 691.7 2004.9 692.5 2005.6 693.2C2006.2 694.0 2006.8 694.8 2007.5 695.6C2008.1 696.4 2008.7 697.1 2009.3 697.9C2010.0 698.7 2010.6 699.5 2011.2 700.3C2011.9 701.1 2012.5 701.8 2013.1 702.6C2013.7 703.4 2014.3 704.2 2015.0 705.0C2015.6 705.8 2016.2 706.5 2016.8 707.3C2017.5 708.1 2018.1 708.9 2018.7 709.7C2019.3 710.5 2019.9 711.3 2020.6 712.0C2021.2 712.8 2021.8 713.6 2022.4 714.4C2023.0 715.2 2023.6 716.0 2024.3 716.8C2024.9 717.6 2025.5 718.4 2026.1 719.2C2026.7 720.0 2027.3 720.7 2027.9 721.5C2028.5 722.3 2029.2 723.1 2029.8 723.9C2030.4 724.7 2031.0 725.5 2031.6 726.3C2032.2 727.1 2032.8 727.9 2033.4 728.7C2034.0 729.5 2034.6 730.3 2035.2 731.1C2035.8 731.9 2036.4 732.7 2037.0 733.5C2037.6 734.3 2038.2 735.1 2038.8 735.9C2039.4 736.7 2040.0 737.5 2040.6 738.3C2041.2 739.1 2041.8 739.9 2042.4 740.7C2043.0 741.5 2043.6 742.3 2044.2 743.1C2044.8 743.9 2045.4 744.7 2046.0 745.6C2046.6 746.4 2047.2 747.2 2047.7 748.0C2048.3 748.8 2048.9 749.6 2049.5 750.4C2050.1 751.2 2050.7 752.0 2051.3 752.8C2051.9 753.7 2052.4 754.5 2053.0 755.3C2053.6 756.1 2054.2 756.9 2054.8 757.7C2055.4 758.5 2055.9 759.4 2056.5 760.2C2057.1 761.0 2057.7 761.8 2058.3 762.6C2058.8 763.4 2059.4 764.3 2060.0 765.1C2060.6 765.9 2061.1 766.7 2061.7 767.5C2062.3 768.3 2062.9 769.2 2063.4 770.0C2064.0 770.8 2064.6 771.6 2065.2 772.5C2065.7 773.3 2066.3 774.1 2066.9 774.9C2067.5 775.7 2068.0 776.6 2068.6 777.4C2069.2 778.2 2069.7 779.0 2070.3 779.9C2070.9 780.7 2071.5 781.5 2072.0 782.3C2072.6 783.1 2073.2 784.0 2073.7 784.8C2074.3 785.6 2074.9 786.4 2075.4 787.3C2076.0 788.1 2076.6 788.9 2077.1 789.7C2077.7 790.6 2078.3 791.4 2078.8 792.2C2079.4 793.1 2080.0 793.9 2080.5 794.7C2081.1 795.5 2081.7 796.4 2082.2 797.2C2082.8 798.0 2083.4 798.8 2083.9 799.7C2084.5 800.5 2085.1 801.3 2085.6 802.1C2086.2 803.0 2086.8 803.8 2087.3 804.6C2087.9 805.5 2088.5 806.3 2089.0 807.1C2089.6 807.9 2090.2 808.8 2090.7 809.6C2091.3 810.4 2091.9 811.2 2092.4 812.1C2093.0 812.9 2093.6 813.7 2094.1 814.6C2094.7 815.4 2095.3 816.2 2095.8 817.0C2096.4 817.9 2096.9 818.7 2097.5 819.5C2098.1 820.3 2098.6 821.2 2099.2 822.0C2099.8 822.8 2100.3 823.7 2100.9 824.5C2101.5 825.3 2102.1 826.1 2102.6 827.0C2103.2 827.8 2103.8 828.6 2104.3 829.4C2104.9 830.3 2105.5 831.1 2106.0 831.9C2106.6 832.7 2107.2 833.6 2107.7 834.4C2108.3 835.2 2108.9 836.0 2109.5 836.9C2110.0 837.7 2110.6 838.5 2111.2 839.3C2111.7 840.2 2112.3 841.0 2112.9 841.8C2113.5 842.6 2114.0 843.4 2114.6 844.3C2115.2 845.1 2115.8 845.9 2116.3 846.7C2116.9 847.5 2117.5 848.4 2118.1 849.2C2118.6 850.0 2119.2 850.8 2119.8 851.6C2120.4 852.5 2121.0 853.3 2121.5 854.1C2122.1 854.9 2122.7 855.7 2123.3 856.6C2123.8 857.4 2124.4 858.2 2125.0 859.0C2125.6 859.8 2126.2 860.7 2126.8 861.5C2127.3 862.3 2127.9 863.1 2128.5 863.9C2129.1 864.7 2129.7 865.6 2130.2 866.4C2130.8 867.2 2131.4 868.0 2132.0 868.8C2132.6 869.6 2133.2 870.4 2133.7 871.3C2134.3 872.1 2134.9 872.9 2135.5 873.7C2136.1 874.5 2136.7 875.3 2137.2 876.2C2137.8 877.0 2138.4 877.8 2139.0 878.6C2139.6 879.4 2140.2 880.2 2140.8 881.0C2141.3 881.9 2141.9 882.7 2142.5 883.5C2143.1 884.3 2143.7 885.1 2144.3 885.9C2144.9 886.7 2145.4 887.5 2146.0 888.4C2146.6 889.2 2147.2 890.0 2147.8 890.8C2148.4 891.6 2149.0 892.4 2149.5 893.2C2150.1 894.1 2150.7 894.9 2151.3 895.7C2151.9 896.5 2152.5 897.3 2153.1 898.1C2153.6 898.9 2154.2 899.7 2154.8 900.6C2155.4 901.4 2156.0 902.2 2156.6 903.0C2157.2 903.8 2157.8 904.6 2158.3 905.4C2158.9 906.2 2159.5 907.1 2160.1 907.9C2160.7 908.7 2161.3 909.5 2161.9 910.3C2162.4 911.1 2163.0 911.9 2163.6 912.7C2164.2 913.6 2164.8 914.4 2165.4 915.2C2166.0 916.0 2166.5 916.8 2167.1 917.6C2167.7 918.4 2168.3 919.2 2168.9 920.1C2169.5 920.9 2170.1 921.7 2170.6 922.5C2171.2 923.3 2171.8 924.1 2172.4 924.9C2173.0 925.8 2173.6 926.6 2174.1 927.4C2174.7 928.2 2175.3 929.0 2175.9 929.8C2176.5 930.6 2177.1 931.4 2177.6 932.3C2178.2 933.1 2178.8 933.9 2179.4 934.7C2180.0 935.5 2180.6 936.3 2181.1 937.2C2181.7 938.0 2182.3 938.8 2182.9 939.6C2183.5 940.4 2184.0 941.2 2184.6 942.0C2185.2 942.9 2185.8 943.7 2186.4 944.5C2186.9 945.3 2187.5 946.1 2188.1 946.9C2188.7 947.8 2189.2 948.6 2189.8 949.4C2190.4 950.2 2191.0 951.0 2191.6 951.8C2192.1 952.7 2192.7 953.5 2193.3 954.3C2193.9 955.1 2194.4 955.9 2195.0 956.7C2195.6 957.6 2196.2 958.4 2196.7 959.2C2197.3 960.0 2197.9 960.8 2198.5 961.7C2199.0 962.5 2199.6 963.3 2200.2 964.1C2200.8 964.9 2201.3 965.7 2201.9 966.6C2202.5 967.4 2203.1 968.2 2203.6 969.0C2204.2 969.8 2204.8 970.7 2205.4 971.5C2205.9 972.3 2206.5 973.1 2207.1 973.9C2207.7 974.8 2208.2 975.6 2208.8 976.4C2209.4 977.2 2210.0 978.0 2210.5 978.9C2211.1 979.7 2211.7 980.5 2212.2 981.3C2212.8 982.1 2213.4 983.0 2214.0 983.8C2214.5 984.6 2215.1 985.4 2215.7 986.2C2216.3 987.1 2216.8 987.9 2217.4 988.7C2218.0 989.5 2218.6 990.3 2219.1 991.2C2219.7 992.0 2220.3 992.8 2220.9 993.6C2221.4 994.4 2222.0 995.3 2222.6 996.1C2223.1 996.9 2223.7 997.7 2224.3 998.5C2224.9 999.4 2225.4 1000.2 2226.0 1001.0C2226.6 1001.8 2227.2 1002.6 2227.7 1003.5C2228.3 1004.3 2228.9 1005.1 2229.5 1005.9C2230.1 1006.7 2230.6 1007.6 2231.2 1008.4C2231.8 1009.2 2232.4 1010.0 2232.9 1010.8C2233.5 1011.7 2234.1 1012.5 2234.7 1013.3C2235.2 1014.1 2235.8 1014.9 2236.4 1015.8C2237.0 1016.6 2237.6 1017.4 2238.1 1018.2C2238.7 1019.0 2239.3 1019.9 2239.9 1020.7C2240.4 1021.5 2241.0 1022.3 2241.6 1023.1C2242.2 1024.0 2242.8 1024.8 2243.4 1025.6C2243.9 1026.4 2244.5 1027.2 2245.1 1028.1C2245.7 1028.9 2246.3 1029.7 2246.8 1030.5C2247.4 1031.3 2248.0 1032.2 2248.6 1033.0C2249.2 1033.8 2249.8 1034.6 2250.3 1035.4C2250.9 1036.2 2251.5 1037.1 2252.1 1037.9C2252.7 1038.7 2253.3 1039.5 2253.9 1040.3C2254.4 1041.1 2255.0 1042.0 2255.6 1042.8C2256.2 1043.6 2256.8 1044.4 2257.4 1045.2C2258.0 1046.0 2258.6 1046.9 2259.2 1047.7C2259.8 1048.5 2260.4 1049.3 2261.0 1050.1C2261.6 1050.9 2262.2 1051.7 2262.8 1052.5C2263.4 1053.3 2264.0 1054.1 2264.6 1055.0C2265.2 1055.8 2265.8 1056.6 2266.4 1057.4C2267.0 1058.2 2267.6 1059.0 2268.2 1059.7C2268.8 1060.5 2269.5 1061.3 2270.1 1062.1C2270.7 1062.9 2271.3 1063.7 2272.0 1064.5C2272.6 1065.3 2273.2 1066.0 2273.9 1066.8C2274.5 1067.6 2275.1 1068.4 2275.8 1069.1C2276.4 1069.9 2277.1 1070.7 2277.7 1071.5C2278.4 1072.2 2279.0 1073.0 2279.7 1073.7C2280.3 1074.5 2281.0 1075.2 2281.7 1076.0C2282.3 1076.7 2283.0 1077.5 2283.7 1078.2C2284.4 1078.9 2285.1 1079.7 2285.7 1080.4C2286.4 1081.1 2287.1 1081.9 2287.8 1082.6C2288.5 1083.3 2289.2 1084.0 2289.9 1084.7C2290.7 1085.4 2291.4 1086.1 2292.1 1086.8C2292.8 1087.5 2293.5 1088.2 2294.3 1088.9C2295.0 1089.6 2295.8 1090.3 2296.5 1090.9C2297.3 1091.6 2298.0 1092.3 2298.8 1092.9C2299.5 1093.6 2300.3 1094.2 2301.1 1094.8C2301.9 1095.5 2302.7 1096.1 2303.5 1096.7C2304.3 1097.2 2305.1 1097.8 2305.9 1098.4C2306.7 1098.9 2307.6 1099.4 2308.4 1099.9C2309.3 1100.4 2310.1 1100.9 2311.0 1101.3C2311.9 1101.7 2312.7 1102.1 2313.7 1102.5C2314.6 1102.9 2315.5 1103.2 2316.4 1103.5C2317.3 1103.8 2318.3 1104.0 2319.3 1104.2C2320.2 1104.4 2321.2 1104.6 2322.2 1104.7C2323.2 1104.8 2324.2 1104.9 2325.2 1105.0C2326.3 1105.1 2327.3 1105.1 2328.3 1105.2C2329.3 1105.2 2330.4 1105.2 2331.4 1105.3C2332.4 1105.3 2333.5 1105.3 2334.5 1105.4C2335.5 1105.4 2336.5 1105.5 2337.6 1105.5C2338.6 1105.6 2339.6 1105.7 2340.6 1105.8C2341.5 1106.0 2342.5 1106.1 2343.5 1106.3C2344.4 1106.5 2345.3 1106.8 2346.2 1107.1C2347.1 1107.3 2348.0 1107.7 2348.9 1108.1C2349.7 1108.4 2350.6 1108.9 2351.4 1109.4C2352.2 1109.8 2352.9 1110.4 2353.7 1111.0C2354.4 1111.5 2355.1 1112.2 2355.8 1112.8C2356.5 1113.5 2357.1 1114.2 2357.8 1114.9C2358.4 1115.7 2359.0 1116.4 2359.6 1117.2C2360.2 1118.0 2360.8 1118.8 2361.4 1119.7C2362.0 1120.5 2362.5 1121.3 2363.1 1122.2C2363.6 1123.1 2364.1 1123.9 2364.7 1124.8C2365.2 1125.7 2365.7 1126.5 2366.2 1127.4C2366.7 1128.3 2367.2 1129.2 2367.7 1130.1C2368.2 1130.9 2368.7 1131.8 2369.2 1132.7C2369.7 1133.6 2370.1 1134.5 2370.6 1135.4C2371.1 1136.3 2371.5 1137.2 2372.0 1138.1C2372.4 1139.0 2372.9 1139.9 2373.3 1140.8C2373.8 1141.7 2374.2 1142.6 2374.6 1143.5C2375.0 1144.4 2375.5 1145.3 2375.9 1146.3C2376.3 1147.2 2376.7 1148.1 2377.1 1149.0C2377.5 1149.9 2377.9 1150.9 2378.3 1151.8C2378.7 1152.7 2379.1 1153.6 2379.5 1154.6C2379.9 1155.5 2380.3 1156.4 2380.7 1157.3C2381.0 1158.3 2381.4 1159.2 2381.8 1160.1C2382.2 1161.1 2382.5 1162.0 2382.9 1162.9C2383.3 1163.9 2383.6 1164.8 2384.0 1165.7C2384.3 1166.7 2384.7 1167.6 2385.0 1168.6C2385.4 1169.5 2385.8 1170.4 2386.1 1171.4C2386.5 1172.3 2386.8 1173.3 2387.1 1174.2C2387.5 1175.2 2387.8 1176.1 2388.2 1177.0C2388.5 1178.0 2388.9 1178.9 2389.2 1179.9C2389.5 1180.8 2389.9 1181.8 2390.2 1182.7C2390.6 1183.7 2390.9 1184.6 2391.2 1185.6C2391.6 1186.5 2391.9 1187.4 2392.2 1188.4C2392.6 1189.3 2392.9 1190.3 2393.3 1191.2C2393.6 1192.2 2393.9 1193.1 2394.3 1194.1C2394.6 1195.0 2395.0 1196.0 2395.3 1196.9C2395.6 1197.8 2396.0 1198.8 2396.3 1199.7C2396.7 1200.7 2397.0 1201.6 2397.4 1202.6C2397.7 1203.5 2398.1 1204.4 2398.4 1205.4C2398.8 1206.3 2399.1 1207.3 2399.5 1208.2C2399.8 1209.1 2400.2 1210.1 2400.5 1211.0C2400.9 1211.9 2401.3 1212.9 2401.6 1213.8C2402.0 1214.7 2402.4 1215.7 2402.8 1216.6C2403.1 1217.5 2403.5 1218.4 2403.9 1219.4C2404.3 1220.3 2404.7 1221.2 2405.0 1222.1C2405.4 1223.0 2405.8 1224.0 2406.2 1224.9C2406.6 1225.8 2407.0 1226.7 2407.4 1227.6C2407.9 1228.5 2408.3 1229.5 2408.7 1230.4C2409.1 1231.3 2409.5 1232.2 2410.0 1233.1C2410.4 1234.0 2410.8 1234.9 2411.3 1235.8C2411.7 1236.7 2412.2 1237.6 2412.6 1238.5C2413.1 1239.3 2413.6 1240.2 2414.0 1241.1C2414.5 1242.0 2415.2 1243.3 2415.5 1243.8" stroke="#454545" stroke-width="4.1"/>
<path d="M84.4 908.9C84.6 908.4 85.1 906.8 85.6 905.9C86.0 904.9 86.5 904.0 87.0 903.1C87.5 902.2 88.0 901.3 88.6 900.5C89.2 899.7 89.8 898.9 90.4 898.1C91.1 897.4 91.8 896.6 92.5 895.9C93.1 895.2 93.9 894.6 94.6 893.9C95.4 893.2 96.1 892.6 96.9 892.0C97.7 891.4 98.5 890.8 99.3 890.2C100.1 889.6 101.0 889.0 101.8 888.4C102.6 887.9 103.5 887.3 104.3 886.8C105.2 886.2 106.0 885.7 106.9 885.1C107.8 884.6 108.6 884.0 109.5 883.5C110.3 882.9 111.2 882.4 112.0 881.8C112.9 881.3 113.7 880.7 114.6 880.1C115.4 879.6 116.2 879.0 117.0 878.4C117.8 877.8 118.6 877.2 119.4 876.6C120.2 875.9 120.9 875.3 121.6 874.6C122.4 874.0 123.1 873.3 123.8 872.6C124.5 871.9 125.2 871.2 125.8 870.5C126.5 869.7 127.2 869.0 127.8 868.3C128.5 867.5 129.1 866.8 129.7 866.0C130.3 865.2 130.9 864.4 131.5 863.6C132.1 862.9 132.7 862.1 133.3 861.3C133.9 860.4 134.5 859.6 135.0 858.8C135.6 858.0 136.2 857.2 136.7 856.3C137.3 855.5 137.8 854.7 138.4 853.8C138.9 853.0 139.5 852.2 140.0 851.3C140.6 850.5 141.1 849.6 141.7 848.8C142.2 848.0 142.8 847.1 143.3 846.3C143.9 845.4 144.4 844.6 145.0 843.8C145.5 842.9 146.1 842.1 146.6 841.2C147.2 840.4 147.8 839.6 148.3 838.7C148.9 837.9 149.4 837.1 150.0 836.2C150.5 835.4 151.1 834.6 151.7 833.7C152.2 832.9 152.8 832.1 153.4 831.3C153.9 830.4 154.5 829.6 155.1 828.8C155.6 828.0 156.2 827.1 156.8 826.3C157.3 825.5 157.9 824.7 158.5 823.8C159.0 823.0 159.6 822.2 160.2 821.4C160.8 820.5 161.3 819.7 161.9 818.9C162.5 818.1 163.1 817.3 163.6 816.4C164.2 815.6 164.8 814.8 165.4 814.0C165.9 813.2 166.5 812.4 167.1 811.5C167.7 810.7 168.3 809.9 168.8 809.1C169.4 808.3 170.0 807.5 170.6 806.7C171.2 805.8 171.8 805.0 172.3 804.2C172.9 803.4 173.5 802.6 174.1 801.8C174.7 801.0 175.3 800.2 175.9 799.3C176.4 798.5 177.0 797.7 177.6 796.9C178.2 796.1 178.8 795.3 179.4 794.5C180.0 793.7 180.6 792.9 181.1 792.1C181.7 791.3 182.3 790.4 182.9 789.6C183.5 788.8 184.1 788.0 184.7 787.2C185.3 786.4 185.9 785.6 186.5 784.8C187.1 784.0 187.6 783.2 188.2 782.4C188.8 781.6 189.4 780.8 190.0 780.0C190.6 779.2 191.2 778.3 191.8 777.5C192.4 776.7 193.0 775.9 193.6 775.1C194.2 774.3 194.8 773.5 195.4 772.7C195.9 771.9 196.5 771.1 197.1 770.3C197.7 769.5 198.3 768.7 198.9 767.9C199.5 767.1 200.1 766.3 200.7 765.5C201.3 764.7 201.9 763.9 202.5 763.0C203.1 762.2 203.7 761.4 204.3 760.6C204.8 759.8 205.4 759.0 206.0 758.2C206.6 757.4 207.2 756.6 207.8 755.8C208.4 755.0 209.0 754.2 209.6 753.4C210.2 752.6 210.8 751.8 211.4 751.0C212.0 750.2 212.5 749.3 213.1 748.5C213.7 747.7 214.3 746.9 214.9 746.1C215.5 745.3 216.1 744.5 216.7 743.7C217.3 742.9 217.9 742.1 218.4 741.3C219.0 740.5 219.6 739.6 220.2 738.8C220.8 738.0 221.4 737.2 222.0 736.4C222.6 735.6 223.1 734.8 223.7 734.0C224.3 733.2 224.9 732.3 225.5 731.5C226.1 730.7 226.6 729.9 227.2 729.1C227.8 728.3 228.4 727.5 229.0 726.6C229.5 725.8 230.1 725.0 230.7 724.2C231.3 723.4 231.9 722.6 232.4 721.7C233.0 720.9 233.6 720.1 234.2 719.3C234.7 718.5 235.3 717.7 235.9 716.8C236.5 716.0 237.0 715.2 237.6 714.4C238.2 713.5 238.8 712.7 239.3 711.9C239.9 711.1 240.5 710.3 241.0 709.4C241.6 708.6 242.2 707.8 242.7 706.9C243.3 706.1 243.9 705.3 244.4 704.5C245.0 703.6 245.5 702.8 246.1 702.0C246.7 701.1 247.2 700.3 247.8 699.5C248.3 698.6 248.9 697.8 249.5 697.0C250.0 696.1 250.6 695.3 251.1 694.5C251.7 693.6 252.2 692.8 252.8 692.0C253.3 691.1 253.9 690.3 254.4 689.4C255.0 688.6 255.5 687.8 256.1 686.9C256.6 686.1 257.2 685.2 257.7 684.4C258.2 683.5 258.8 682.7 259.3 681.9C259.9 681.0 260.4 680.2 261.0 679.3C261.5 678.5 262.1 677.6 262.6 676.8C263.1 675.9 263.7 675.1 264.2 674.3C264.8 673.4 265.3 672.6 265.9 671.7C266.4 670.9 267.0 670.1 267.6 669.2C268.1 668.4 268.7 667.6 269.2 666.7C269.8 665.9 270.3 665.1 270.9 664.3C271.5 663.4 272.0 662.6 272.6 661.8C273.2 661.0 273.8 660.2 274.4 659.3C274.9 658.5 275.5 657.7 276.1 656.9C276.7 656.1 277.3 655.3 277.9 654.5C278.5 653.7 279.1 652.9 279.7 652.1C280.3 651.3 280.9 650.6 281.5 649.8C282.2 649.0 282.8 648.2 283.4 647.4C284.0 646.7 284.7 645.9 285.3 645.1C286.0 644.4 286.6 643.6 287.2 642.8C287.9 642.1 288.5 641.3 289.2 640.6C289.8 639.8 290.5 639.1 291.1 638.3C291.8 637.6 292.5 636.8 293.1 636.1C293.8 635.3 294.4 634.6 295.1 633.8C295.8 633.1 296.4 632.3 297.1 631.6C297.8 630.9 298.5 630.1 299.1 629.4C299.8 628.6 300.5 627.9 301.1 627.1C301.8 626.4 302.5 625.7 303.2 624.9C303.8 624.2 304.5 623.5 305.2 622.7C305.9 622.0 306.5 621.2 307.2 620.5C307.9 619.7 308.5 619.0 309.2 618.3C309.9 617.5 310.6 616.8 311.2 616.0C311.9 615.3 312.6 614.5 313.2 613.8C313.9 613.0 314.5 612.3 315.2 611.5C315.9 610.8 316.5 610.0 317.2 609.3C317.9 608.5 318.5 607.7 319.2 607.0C319.8 606.2 320.5 605.5 321.1 604.7C321.8 604.0 322.5 603.2 323.1 602.4C323.8 601.7 324.4 600.9 325.1 600.1C325.7 599.4 326.4 598.6 327.0 597.9C327.7 597.1 328.3 596.3 329.0 595.6C329.6 594.8 330.3 594.0 330.9 593.3C331.6 592.5 332.2 591.7 332.9 591.0C333.5 590.2 334.2 589.4 334.8 588.7C335.5 587.9 336.1 587.1 336.8 586.4C337.4 585.6 338.1 584.8 338.7 584.0C339.4 583.3 340.0 582.5 340.6 581.7C341.3 581.0 341.9 580.2 342.6 579.4C343.2 578.7 343.9 577.9 344.5 577.1C345.2 576.4 345.8 575.6 346.5 574.8C347.1 574.1 347.8 573.3 348.4 572.5C349.1 571.8 349.7 571.0 350.4 570.3C351.0 569.5 351.7 568.7 352.4 568.0C353.0 567.2 353.7 566.4 354.3 565.7C355.0 564.9 355.6 564.2 356.3 563.4C356.9 562.6 357.6 561.9 358.3 561.1C358.9 560.4 359.6 559.6 360.2 558.9C360.9 558.1 361.6 557.4 362.2 556.6C362.9 555.9 363.6 555.1 364.2 554.4C364.9 553.6 365.6 552.9 366.2 552.1C366.9 551.4 367.6 550.6 368.2 549.9C368.9 549.2 369.6 548.4 370.3 547.7C370.9 547.0 371.6 546.2 372.3 545.5C373.0 544.8 373.7 544.0 374.3 543.3C375.0 542.6 375.7 541.8 376.4 541.1C377.1 540.4 377.8 539.7 378.5 538.9C379.1 538.2 379.8 537.5 380.5 536.8C381.2 536.1 381.9 535.4 382.6 534.7C383.3 533.9 384.0 533.2 384.7 532.5C385.4 531.8 386.2 531.1 386.9 530.4C387.6 529.7 388.3 529.0 389.0 528.3C389.7 527.6 390.4 527.0 391.2 526.3C391.9 525.6 392.6 524.9 393.3 524.2C394.1 523.5 394.8 522.9 395.5 522.2C396.2 521.5 397.0 520.8 397.7 520.2C398.5 519.5 399.2 518.8 399.9 518.2C400.7 517.5 401.4 516.8 402.2 516.2C402.9 515.5 403.7 514.9 404.5 514.2C405.2 513.6 406.0 513.0 406.7 512.3C407.5 511.7 408.3 511.0 409.0 510.4C409.8 509.8 410.6 509.1 411.4 508.5C412.2 507.9 412.9 507.3 413.7 506.7C414.5 506.0 415.3 505.4 416.1 504.8C416.9 504.2 417.7 503.6 418.5 503.0C419.3 502.4 420.1 501.8 420.9 501.2C421.7 500.7 422.5 500.1 423.4 499.5C424.2 498.9 425.0 498.3 425.8 497.8C426.7 497.2 427.5 496.6 428.3 496.1C429.2 495.5 430.0 494.9 430.9 494.4C431.7 493.8 432.5 493.3 433.4 492.8C434.3 492.2 435.1 491.7 436.0 491.2C436.8 490.6 437.7 490.1 438.6 489.6C439.5 489.1 440.3 488.6 441.2 488.0C442.1 487.5 443.0 487.0 443.9 486.6C444.8 486.1 445.7 485.6 446.6 485.1C447.5 484.6 448.4 484.2 449.3 483.7C450.2 483.3 451.1 482.8 452.0 482.4C452.9 481.9 453.8 481.5 454.8 481.1C455.7 480.7 456.6 480.3 457.5 479.9C458.5 479.5 459.4 479.1 460.3 478.7C461.2 478.4 462.2 478.0 463.1 477.7C464.1 477.3 465.0 477.0 465.9 476.7C466.9 476.4 467.8 476.1 468.8 475.8C469.7 475.5 470.7 475.2 471.6 474.9C472.6 474.7 473.6 474.4 474.5 474.2C475.5 474.0 476.4 473.8 477.4 473.6C478.3 473.4 479.3 473.2 480.3 473.0C481.2 472.9 482.2 472.7 483.2 472.6C484.1 472.5 485.1 472.4 486.1 472.3C487.1 472.2 488.0 472.1 489.0 472.1C490.0 472.1 491.0 472.0 491.9 472.0C492.9 472.0 493.9 472.0 494.9 472.1C495.8 472.1 496.8 472.1 497.8 472.2C498.8 472.3 499.7 472.4 500.7 472.5C501.7 472.6 502.7 472.7 503.7 472.9C504.6 473.0 505.6 473.2 506.6 473.3C507.6 473.5 508.5 473.7 509.5 473.9C510.5 474.1 511.5 474.3 512.4 474.6C513.4 474.8 514.4 475.1 515.4 475.4C516.3 475.6 517.3 475.9 518.3 476.2C519.2 476.5 520.2 476.8 521.2 477.1C522.1 477.5 523.1 477.8 524.1 478.1C525.0 478.5 526.0 478.8 526.9 479.2C527.9 479.6 528.8 480.0 529.8 480.4C530.7 480.8 531.7 481.2 532.6 481.6C533.6 482.0 534.5 482.4 535.4 482.8C536.4 483.3 537.3 483.7 538.2 484.1C539.2 484.6 540.1 485.0 541.0 485.5C541.9 486.0 542.8 486.4 543.8 486.9C544.7 487.4 545.6 487.9 546.5 488.3C547.4 488.8 548.3 489.3 549.2 489.8C550.1 490.3 551.0 490.8 551.8 491.3C552.7 491.8 553.6 492.3 554.5 492.9C555.4 493.4 556.2 493.9 557.1 494.4C557.9 494.9 558.8 495.5 559.7 496.0C560.5 496.5 561.4 497.0 562.2 497.6C563.1 498.1 563.9 498.6 564.7 499.2C565.6 499.7 566.4 500.3 567.2 500.8C568.1 501.4 568.9 501.9 569.7 502.5C570.5 503.0 571.3 503.6 572.2 504.2C573.0 504.7 573.8 505.3 574.6 505.8C575.4 506.4 576.2 507.0 577.0 507.6C577.8 508.1 578.6 508.7 579.4 509.3C580.2 509.9 581.0 510.4 581.8 511.0C582.6 511.6 583.4 512.2 584.2 512.8C585.0 513.4 585.8 514.0 586.5 514.6C587.3 515.2 588.1 515.8 588.9 516.3C589.7 516.9 590.5 517.5 591.2 518.2C592.0 518.8 592.8 519.4 593.6 520.0C594.4 520.6 595.1 521.2 595.9 521.8C596.7 522.4 597.5 523.0 598.2 523.6C599.0 524.2 599.8 524.9 600.6 525.5C601.3 526.1 602.1 526.7 602.9 527.3C603.7 528.0 604.4 528.6 605.2 529.2C606.0 529.8 606.8 530.4 607.5 531.1C608.3 531.7 609.1 532.3 609.9 533.0C610.7 533.6 611.4 534.2 612.2 534.8C613.0 535.5 613.8 536.1 614.6 536.7C615.3 537.3 616.1 538.0 616.9 538.6C617.7 539.2 618.5 539.8 619.3 540.5C620.1 541.1 620.9 541.7 621.6 542.3C622.4 543.0 623.2 543.6 624.0 544.2C624.8 544.8 625.6 545.4 626.4 546.0C627.2 546.6 628.0 547.2 628.8 547.9C629.6 548.5 630.4 549.1 631.2 549.7C632.0 550.3 632.9 550.8 633.7 551.4C634.5 552.0 635.3 552.6 636.1 553.2C636.9 553.8 637.8 554.4 638.6 554.9C639.4 555.5 640.3 556.1 641.1 556.6C641.9 557.2 642.8 557.8 643.6 558.3C644.4 558.9 645.3 559.4 646.1 559.9C647.0 560.5 647.8 561.0 648.7 561.5C649.5 562.1 650.4 562.6 651.3 563.1C652.1 563.6 653.0 564.1 653.9 564.6C654.7 565.1 655.6 565.6 656.5 566.1C657.4 566.6 658.3 567.0 659.1 567.5C660.0 568.0 660.9 568.4 661.8 568.9C662.7 569.3 663.6 569.8 664.5 570.2C665.4 570.6 666.4 571.1 667.3 571.5C668.2 571.9 669.1 572.3 670.0 572.7C671.0 573.1 671.9 573.5 672.8 573.9C673.7 574.2 674.7 574.6 675.6 575.0C676.5 575.3 677.5 575.7 678.4 576.0C679.4 576.4 680.3 576.7 681.3 577.0C682.2 577.4 683.2 577.7 684.1 578.0C685.1 578.3 686.0 578.6 687.0 578.9C688.0 579.2 688.9 579.5 689.9 579.7C690.9 580.0 691.8 580.3 692.8 580.5C693.8 580.8 694.7 581.0 695.7 581.2C696.7 581.5 697.7 581.7 698.6 581.9C699.6 582.1 700.6 582.3 701.6 582.5C702.6 582.7 703.5 582.8 704.5 583.0C705.5 583.2 706.5 583.3 707.5 583.5C708.5 583.6 709.5 583.8 710.5 583.9C711.4 584.0 712.4 584.1 713.4 584.2C714.4 584.4 715.4 584.4 716.4 584.5C717.4 584.6 718.4 584.7 719.4 584.7C720.4 584.8 721.4 584.9 722.4 584.9C723.4 584.9 724.4 585.0 725.4 585.0C726.4 585.0 727.4 585.0 728.4 585.0C729.3 585.0 730.3 585.0 731.3 584.9C732.3 584.9 733.3 584.9 734.3 584.8C735.3 584.8 736.3 584.7 737.3 584.6C738.3 584.6 739.3 584.5 740.3 584.4C741.3 584.3 742.3 584.2 743.3 584.1C744.3 584.0 745.3 583.9 746.3 583.8C747.3 583.7 748.3 583.6 749.3 583.5C750.3 583.4 751.3 583.2 752.3 583.1C753.3 583.0 754.2 582.8 755.2 582.7C756.2 582.6 757.2 582.4 758.2 582.3C759.2 582.2 760.2 582.0 761.2 581.9C762.2 581.8 763.2 581.6 764.2 581.5C765.2 581.4 766.2 581.2 767.2 581.1C768.2 581.0 769.2 580.8 770.2 580.7C771.2 580.6 772.2 580.5 773.2 580.3C774.2 580.2 775.2 580.1 776.2 580.0C777.2 579.9 778.2 579.8 779.2 579.7C780.2 579.6 781.2 579.5 782.2 579.4C783.2 579.4 784.2 579.3 785.2 579.2C786.2 579.2 787.2 579.1 788.2 579.1C789.2 579.0 790.2 579.0 791.2 579.0C792.2 578.9 793.2 578.9 794.2 578.9C795.2 578.9 796.2 578.9 797.2 579.0C798.2 579.0 799.2 579.0 800.2 579.1C801.2 579.1 802.2 579.2 803.2 579.3C804.2 579.3 805.2 579.4 806.2 579.5C807.2 579.7 808.2 579.8 809.2 579.9C810.2 580.1 811.2 580.2 812.2 580.4C813.1 580.5 814.1 580.7 815.1 580.9C816.1 581.1 817.1 581.4 818.0 581.6C819.0 581.8 819.9 582.1 820.9 582.4C821.9 582.6 822.8 582.9 823.8 583.2C824.7 583.5 825.6 583.9 826.6 584.2C827.5 584.6 828.4 584.9 829.3 585.3C830.2 585.7 831.2 586.1 832.1 586.5C833.0 587.0 833.8 587.4 834.7 587.8C835.6 588.3 836.5 588.8 837.4 589.2C838.3 589.7 839.1 590.2 840.0 590.7C840.9 591.2 841.7 591.8 842.6 592.3C843.4 592.8 844.3 593.3 845.2 593.9C846.0 594.4 846.9 595.0 847.7 595.5C848.5 596.1 849.4 596.6 850.2 597.2C851.1 597.8 851.9 598.3 852.8 598.9C853.6 599.5 854.5 600.0 855.3 600.6C856.1 601.2 857.0 601.7 857.8 602.3C858.7 602.8 859.5 603.4 860.4 604.0C861.2 604.5 862.1 605.1 862.9 605.6C863.8 606.1 864.6 606.7 865.5 607.2C866.3 607.7 867.2 608.2 868.1 608.8C868.9 609.3 869.8 609.8 870.7 610.2C871.5 610.7 872.4 611.2 873.3 611.6C874.2 612.1 875.1 612.5 876.0 613.0C876.9 613.4 877.8 613.8 878.7 614.2C879.6 614.6 880.5 614.9 881.4 615.3C882.3 615.6 883.3 616.0 884.2 616.3C885.1 616.6 886.1 616.9 887.0 617.1C888.0 617.4 888.9 617.6 889.9 617.8C890.9 618.0 891.9 618.2 892.8 618.3C893.8 618.5 894.8 618.6 895.8 618.7C896.8 618.8 897.9 618.9 898.9 619.0C899.9 619.1 900.9 619.2 901.9 619.2C902.9 619.3 903.9 619.4 905.0 619.4C906.0 619.5 907.0 619.6 908.0 619.6C909.0 619.7 910.0 619.8 911.0 619.9C912.1 620.0 913.1 620.1 914.1 620.3C915.0 620.4 916.0 620.6 917.0 620.8C918.0 621.0 919.0 621.2 919.9 621.5C920.9 621.7 921.8 622.0 922.7 622.3C923.7 622.7 924.6 623.1 925.5 623.5C926.4 623.9 927.3 624.3 928.1 624.8C929.0 625.3 929.9 625.8 930.7 626.4C931.5 626.9 932.4 627.5 933.2 628.1C934.0 628.7 934.8 629.3 935.6 630.0C936.4 630.6 937.2 631.3 937.9 632.0C938.7 632.7 939.4 633.4 940.1 634.1C940.9 634.9 941.6 635.6 942.3 636.4C943.0 637.1 943.7 637.9 944.4 638.6C945.0 639.4 945.7 640.2 946.3 641.0C947.0 641.8 947.6 642.5 948.2 643.3C948.8 644.1 949.4 644.9 950.0 645.7C950.6 646.4 951.2 647.2 951.7 648.0C952.3 648.8 952.9 649.5 953.4 650.3C954.0 651.1 954.5 651.9 955.0 652.7C955.6 653.5 956.1 654.3 956.6 655.1C957.2 655.9 957.7 656.8 958.3 657.7C958.8 658.6 959.4 659.5 960.0 660.3C960.5 661.2 961.1 662.1 961.7 663.0C962.3 663.9 962.9 664.7 963.6 665.6C964.2 666.4 964.9 667.2 965.6 667.9C966.3 668.7 967.0 669.4 967.8 670.1C968.5 670.7 969.3 671.3 970.1 671.8C971.0 672.3 971.8 672.8 972.7 673.1C973.6 673.5 974.6 673.8 975.5 674.0C976.5 674.1 977.4 674.3 978.4 674.3C979.4 674.3 980.4 674.3 981.4 674.2C982.3 674.1 983.3 673.9 984.3 673.6C985.2 673.3 986.1 673.0 987.0 672.6C987.9 672.2 988.8 671.7 989.6 671.2C990.5 670.7 991.3 670.1 992.1 669.5C992.9 669.0 993.7 668.3 994.6 667.7C995.4 667.1 996.2 666.4 997.0 665.8C997.8 665.2 998.6 664.5 999.4 663.9C1000.3 663.3 1001.1 662.7 1002.0 662.2C1002.8 661.6 1003.7 661.1 1004.7 660.7C1005.6 660.3 1006.5 659.9 1007.5 659.5C1008.4 659.2 1009.4 659.0 1010.4 658.8C1011.4 658.6 1012.4 658.4 1013.4 658.4C1014.4 658.3 1015.4 658.3 1016.4 658.4C1017.4 658.4 1018.3 658.6 1019.3 658.8C1020.3 658.9 1021.2 659.2 1022.2 659.5C1023.2 659.7 1024.1 660.0 1025.1 660.3C1026.0 660.6 1027.0 660.9 1028.0 661.1C1029.0 661.4 1029.9 661.6 1030.9 661.8C1031.9 662.0 1032.9 662.2 1034.0 662.3C1035.0 662.4 1036.0 662.4 1037.0 662.4C1038.0 662.4 1039.0 662.3 1040.0 662.2C1041.0 662.0 1042.0 661.8 1042.9 661.6C1043.8 661.3 1044.8 661.0 1045.6 660.6C1046.5 660.2 1047.3 659.7 1048.1 659.2C1049.0 658.7 1049.7 658.1 1050.5 657.5C1051.2 656.9 1052.0 656.3 1052.7 655.6C1053.4 654.9 1054.1 654.1 1054.7 653.4C1055.4 652.6 1056.1 651.8 1056.7 651.0C1057.4 650.2 1058.0 649.4 1058.6 648.5C1059.3 647.7 1059.9 646.8 1060.5 646.0C1061.2 645.2 1061.8 644.3 1062.4 643.5C1063.1 642.6 1063.7 641.8 1064.4 641.0C1065.0 640.2 1065.7 639.4 1066.4 638.7C1067.1 637.9 1067.8 637.2 1068.5 636.6C1069.3 635.9 1070.0 635.3 1070.8 634.7C1071.6 634.2 1072.4 633.7 1073.3 633.3C1074.1 632.8 1075.0 632.5 1075.9 632.2C1076.9 631.9 1077.8 631.7 1078.8 631.6C1079.8 631.5 1080.8 631.5 1081.8 631.5C1082.8 631.5 1083.8 631.7 1084.8 631.9C1085.7 632.1 1086.7 632.4 1087.6 632.7C1088.6 633.1 1089.5 633.6 1090.3 634.1C1091.2 634.6 1092.0 635.2 1092.9 635.8C1093.7 636.4 1094.5 637.1 1095.3 637.7C1096.1 638.4 1096.9 639.1 1097.6 639.8C1098.4 640.5 1099.2 641.2 1100.0 641.8C1100.8 642.5 1101.6 643.1 1102.4 643.7C1103.2 644.2 1104.0 644.8 1104.9 645.2C1105.8 645.7 1106.6 646.1 1107.5 646.4C1108.4 646.7 1109.4 646.9 1110.3 647.1C1111.3 647.3 1112.2 647.4 1113.2 647.5C1114.2 647.6 1115.2 647.6 1116.3 647.6C1117.3 647.5 1118.4 647.4 1119.4 647.4C1120.5 647.3 1121.6 647.1 1122.6 647.0C1123.7 646.9 1124.8 646.7 1125.8 646.7C1126.8 646.6 1127.8 646.6 1128.8 646.6C1129.8 646.7 1130.7 646.8 1131.6 647.0C1132.4 647.2 1133.3 647.5 1134.1 647.8C1134.9 648.1 1135.7 648.5 1136.4 649.0C1137.2 649.5 1138.0 650.0 1138.7 650.6C1139.5 651.1 1140.2 651.8 1140.9 652.5C1141.7 653.1 1142.4 653.9 1143.2 654.6C1144.0 655.4 1144.8 656.2 1145.6 657.1C1146.4 657.9 1147.2 658.8 1148.0 659.6C1148.8 660.4 1149.7 661.3 1150.5 662.1C1151.4 662.9 1152.2 663.6 1153.1 664.3C1153.9 665.0 1154.8 665.6 1155.6 666.1C1156.5 666.7 1157.3 667.1 1158.1 667.4C1159.0 667.7 1159.8 667.9 1160.6 667.9C1161.4 667.9 1162.2 667.7 1163.0 667.4C1163.8 667.1 1164.6 666.7 1165.4 666.2C1166.1 665.6 1166.9 665.0 1167.7 664.3C1168.4 663.6 1169.2 662.8 1170.0 662.1C1170.7 661.3 1171.5 660.5 1172.3 659.7C1173.1 659.0 1173.9 658.2 1174.7 657.5C1175.5 656.8 1176.4 656.2 1177.2 655.7C1178.1 655.1 1179.0 654.6 1179.8 654.1C1180.7 653.7 1181.6 653.3 1182.5 652.9C1183.4 652.6 1184.3 652.3 1185.3 652.0C1186.2 651.7 1187.1 651.4 1188.1 651.2C1189.0 650.9 1189.9 650.7 1190.9 650.4C1191.8 650.2 1192.7 650.0 1193.7 649.7C1194.6 649.5 1195.5 649.3 1196.5 649.0C1197.4 648.7 1198.3 648.4 1199.2 648.1C1200.1 647.8 1201.0 647.4 1201.9 647.0C1202.8 646.6 1203.7 646.2 1204.5 645.7C1205.4 645.2 1206.2 644.6 1207.0 644.0C1207.9 643.4 1208.7 642.8 1209.5 642.1C1210.3 641.5 1211.1 640.8 1211.9 640.1C1212.7 639.4 1213.5 638.8 1214.3 638.1C1215.1 637.5 1216.0 636.9 1216.8 636.4C1217.7 635.9 1218.5 635.4 1219.4 635.0C1220.3 634.6 1221.2 634.3 1222.1 634.1C1223.0 633.9 1224.0 633.8 1225.0 633.8C1225.9 633.7 1226.9 633.8 1227.8 634.0C1228.8 634.2 1229.8 634.4 1230.7 634.8C1231.6 635.1 1232.5 635.5 1233.4 636.0C1234.2 636.5 1235.0 637.1 1235.8 637.7C1236.7 638.3 1237.4 639.0 1238.2 639.7C1239.0 640.3 1239.7 641.1 1240.5 641.8C1241.2 642.5 1242.0 643.3 1242.7 644.0C1243.5 644.7 1244.2 645.4 1244.9 646.1C1245.7 646.8 1246.5 647.5 1247.2 648.1C1248.0 648.7 1248.8 649.3 1249.6 649.8C1250.4 650.3 1251.3 650.8 1252.1 651.3C1252.9 651.8 1253.8 652.2 1254.6 652.7C1255.5 653.1 1256.4 653.5 1257.3 654.0C1258.1 654.4 1259.0 654.9 1259.9 655.4C1260.8 655.8 1261.7 656.3 1262.6 656.9C1263.5 657.4 1264.3 658.0 1265.2 658.6C1266.1 659.1 1267.0 659.8 1267.9 660.3C1268.8 660.9 1269.7 661.5 1270.6 662.0C1271.5 662.6 1272.4 663.1 1273.3 663.5C1274.2 663.9 1275.1 664.3 1276.0 664.6C1276.9 664.9 1277.8 665.1 1278.6 665.2C1279.5 665.3 1280.4 665.3 1281.3 665.1C1282.2 665.0 1283.1 664.7 1284.0 664.4C1284.9 664.0 1285.7 663.6 1286.6 663.1C1287.5 662.6 1288.4 662.0 1289.3 661.4C1290.1 660.9 1291.0 660.2 1291.9 659.6C1292.8 659.0 1293.6 658.3 1294.5 657.7C1295.4 657.0 1296.3 656.4 1297.2 655.8C1298.0 655.3 1298.9 654.7 1299.8 654.3C1300.7 653.8 1301.5 653.3 1302.4 652.9C1303.3 652.5 1304.2 652.1 1305.1 651.8C1305.9 651.4 1306.8 651.1 1307.7 650.7C1308.6 650.4 1309.5 650.1 1310.5 649.7C1311.4 649.4 1312.3 649.1 1313.2 648.8C1314.2 648.4 1315.1 648.1 1316.1 647.7C1317.0 647.3 1318.0 646.9 1319.0 646.5C1320.0 646.1 1321.0 645.7 1322.0 645.5C1322.9 645.2 1323.9 644.9 1324.9 644.9C1325.9 644.8 1326.8 644.9 1327.8 645.1C1328.7 645.3 1329.6 645.7 1330.5 646.1C1331.4 646.5 1332.3 647.0 1333.2 647.5C1334.1 648.0 1334.9 648.6 1335.7 649.2C1336.6 649.8 1337.4 650.4 1338.2 651.1C1339.0 651.7 1339.9 652.3 1340.7 653.0C1341.5 653.6 1342.3 654.3 1343.1 654.9C1344.0 655.5 1344.8 656.1 1345.7 656.6C1346.5 657.1 1347.4 657.7 1348.3 658.1C1349.1 658.5 1350.0 658.9 1351.0 659.3C1351.9 659.6 1352.9 659.8 1353.9 660.0C1354.8 660.2 1355.8 660.3 1356.8 660.3C1357.8 660.3 1358.9 660.3 1359.9 660.2C1360.9 660.1 1361.9 659.9 1362.8 659.6C1363.8 659.4 1364.7 659.1 1365.7 658.7C1366.6 658.4 1367.4 658.0 1368.3 657.5C1369.1 657.0 1369.9 656.5 1370.7 655.9C1371.5 655.4 1372.2 654.7 1372.9 654.1C1373.6 653.4 1374.3 652.7 1375.0 652.0C1375.7 651.3 1376.4 650.6 1377.0 649.8C1377.7 649.1 1378.3 648.3 1379.0 647.5C1379.7 646.7 1380.3 645.9 1381.0 645.1C1381.6 644.3 1382.3 643.5 1383.0 642.7C1383.7 641.9 1384.4 641.2 1385.2 640.4C1385.9 639.6 1386.6 638.9 1387.4 638.2C1388.2 637.5 1389.0 636.8 1389.8 636.2C1390.6 635.5 1391.5 634.9 1392.3 634.4C1393.2 633.9 1394.1 633.4 1395.0 633.0C1395.8 632.6 1396.8 632.2 1397.7 631.9C1398.6 631.7 1399.6 631.5 1400.5 631.4C1401.5 631.3 1402.5 631.3 1403.5 631.4C1404.5 631.4 1405.5 631.6 1406.5 631.7C1407.5 631.9 1408.5 632.1 1409.5 632.3C1410.5 632.5 1411.6 632.8 1412.6 633.0C1413.6 633.2 1414.6 633.5 1415.6 633.7C1416.6 633.9 1417.7 634.2 1418.6 634.3C1419.6 634.5 1420.6 634.6 1421.6 634.7C1422.5 634.8 1423.5 634.8 1424.4 634.7C1425.3 634.7 1426.2 634.5 1427.1 634.3C1428.0 634.1 1428.9 633.8 1429.7 633.5C1430.6 633.1 1431.4 632.7 1432.2 632.2C1433.0 631.7 1433.8 631.2 1434.6 630.6C1435.4 630.0 1436.1 629.4 1436.9 628.7C1437.6 628.1 1438.4 627.3 1439.1 626.6C1439.8 625.9 1440.5 625.1 1441.2 624.3C1441.9 623.6 1442.6 622.8 1443.3 622.0C1444.0 621.2 1444.7 620.3 1445.4 619.5C1446.0 618.7 1446.7 617.9 1447.4 617.1C1448.0 616.3 1448.7 615.5 1449.4 614.7C1450.0 613.9 1450.7 613.1 1451.4 612.4C1452.1 611.6 1452.7 610.9 1453.5 610.2C1454.2 609.5 1454.9 608.9 1455.6 608.2C1456.3 607.6 1457.1 607.0 1457.9 606.5C1458.7 605.9 1459.5 605.4 1460.3 605.0C1461.2 604.5 1462.1 604.1 1463.0 603.8C1463.9 603.4 1464.9 603.2 1465.8 602.9C1466.8 602.7 1467.8 602.5 1468.8 602.3C1469.9 602.1 1470.9 601.9 1471.9 601.8C1473.0 601.6 1474.0 601.4 1475.0 601.2C1476.0 601.0 1477.1 600.8 1478.0 600.6C1479.0 600.3 1480.0 600.1 1480.9 599.7C1481.8 599.4 1482.7 599.0 1483.6 598.5C1484.5 598.1 1485.3 597.6 1486.1 597.1C1486.9 596.6 1487.7 596.0 1488.4 595.4C1489.2 594.8 1489.9 594.1 1490.6 593.4C1491.3 592.7 1492.0 592.0 1492.6 591.3C1493.3 590.5 1493.9 589.8 1494.5 589.0C1495.1 588.2 1495.7 587.3 1496.3 586.5C1496.9 585.7 1497.5 584.8 1498.0 583.9C1498.6 583.0 1499.1 582.2 1499.7 581.3C1500.2 580.4 1500.8 579.5 1501.3 578.6C1501.9 577.7 1502.4 576.9 1503.0 576.0C1503.6 575.2 1504.2 574.3 1504.8 573.5C1505.4 572.7 1506.0 571.9 1506.6 571.1C1507.3 570.4 1507.9 569.6 1508.6 569.0C1509.4 568.3 1510.1 567.6 1510.8 567.0C1511.6 566.4 1512.4 565.9 1513.3 565.4C1514.1 564.9 1515.0 564.5 1515.9 564.1C1516.8 563.7 1517.8 563.3 1518.7 563.0C1519.7 562.6 1520.7 562.3 1521.6 562.0C1522.6 561.6 1523.6 561.3 1524.5 561.0C1525.5 560.7 1526.5 560.3 1527.4 560.0C1528.4 559.6 1529.3 559.2 1530.2 558.8C1531.1 558.3 1531.9 557.9 1532.8 557.3C1533.6 556.8 1534.4 556.3 1535.1 555.7C1535.9 555.1 1536.7 554.4 1537.4 553.8C1538.1 553.1 1538.8 552.4 1539.5 551.7C1540.2 551.0 1540.9 550.3 1541.5 549.5C1542.2 548.8 1542.8 548.0 1543.5 547.2C1544.1 546.5 1544.8 545.7 1545.4 544.9C1546.1 544.1 1546.7 543.3 1547.3 542.5C1548.0 541.7 1548.6 540.9 1549.3 540.2C1549.9 539.4 1550.6 538.6 1551.3 537.9C1551.9 537.1 1552.6 536.4 1553.3 535.7C1554.0 534.9 1554.8 534.2 1555.5 533.6C1556.2 532.9 1557.0 532.3 1557.8 531.7C1558.6 531.1 1559.4 530.5 1560.2 530.0C1561.0 529.5 1561.9 529.0 1562.8 528.6C1563.7 528.1 1564.6 527.8 1565.6 527.4C1566.5 527.0 1567.5 526.7 1568.5 526.4C1569.4 526.0 1570.4 525.7 1571.4 525.4C1572.3 525.0 1573.3 524.7 1574.2 524.3C1575.2 523.9 1576.1 523.5 1577.0 523.1C1577.8 522.6 1578.7 522.1 1579.5 521.5C1580.3 520.9 1581.0 520.3 1581.7 519.6C1582.4 518.9 1583.1 518.2 1583.8 517.4C1584.5 516.7 1585.1 515.9 1585.8 515.1C1586.4 514.3 1587.0 513.4 1587.7 512.6C1588.3 511.8 1588.9 511.0 1589.6 510.2C1590.2 509.4 1590.9 508.6 1591.6 507.9C1592.3 507.1 1593.0 506.4 1593.7 505.7C1594.4 505.1 1595.2 504.5 1596.0 503.9C1596.8 503.3 1597.6 502.7 1598.5 502.2C1599.3 501.7 1600.2 501.2 1601.0 500.7C1601.9 500.2 1602.8 499.8 1603.7 499.3C1604.6 498.9 1605.5 498.4 1606.3 497.9C1607.2 497.5 1608.1 497.0 1609.0 496.5C1609.8 496.0 1610.7 495.5 1611.5 494.9C1612.3 494.4 1613.2 493.8 1614.0 493.2C1614.8 492.6 1615.6 492.0 1616.4 491.4C1617.2 490.8 1617.9 490.2 1618.7 489.5C1619.5 488.9 1620.3 488.2 1621.0 487.6C1621.8 487.0 1622.5 486.3 1623.3 485.6C1624.1 485.0 1624.8 484.3 1625.6 483.7C1626.4 483.0 1627.1 482.4 1627.9 481.8C1628.7 481.1 1629.4 480.5 1630.2 479.9C1631.0 479.2 1631.7 478.6 1632.5 478.0C1633.3 477.4 1634.1 476.8 1634.9 476.2C1635.6 475.5 1636.4 474.9 1637.2 474.3C1638.0 473.7 1638.8 473.1 1639.6 472.5C1640.3 471.9 1641.1 471.3 1641.9 470.7C1642.7 470.1 1643.5 469.5 1644.3 468.9C1645.1 468.3 1645.9 467.7 1646.7 467.2C1647.5 466.6 1648.3 466.0 1649.1 465.4C1649.9 464.8 1650.7 464.2 1651.5 463.6C1652.3 463.0 1653.1 462.4 1653.9 461.9C1654.7 461.3 1655.5 460.7 1656.3 460.1C1657.1 459.5 1657.9 458.9 1658.7 458.3C1659.5 457.7 1660.3 457.2 1661.1 456.6C1662.0 456.0 1662.8 455.4 1663.6 454.8C1664.4 454.2 1665.2 453.6 1666.0 453.0C1666.8 452.4 1667.6 451.8 1668.4 451.2C1669.2 450.6 1670.1 450.0 1670.9 449.4C1671.7 448.8 1672.5 448.2 1673.3 447.6C1674.1 447.0 1674.9 446.4 1675.7 445.8C1676.5 445.1 1677.3 444.5 1678.1 443.9C1678.9 443.3 1679.7 442.7 1680.5 442.1C1681.3 441.4 1682.1 440.8 1682.9 440.2C1683.7 439.6 1684.5 439.0 1685.3 438.3C1686.0 437.7 1686.8 437.1 1687.6 436.4C1688.4 435.8 1689.2 435.2 1689.9 434.5C1690.7 433.9 1691.5 433.3 1692.2 432.6C1693.0 432.0 1693.8 431.3 1694.5 430.7C1695.3 430.0 1696.0 429.4 1696.8 428.7C1697.5 428.1 1698.3 427.4 1699.0 426.7C1699.8 426.1 1700.5 425.4 1701.2 424.8C1702.0 424.1 1702.7 423.4 1703.4 422.7C1704.2 422.1 1704.9 421.4 1705.6 420.7C1706.3 420.1 1707.1 419.4 1707.8 418.7C1708.5 418.0 1709.2 417.3 1709.9 416.6C1710.6 415.9 1711.3 415.3 1712.0 414.6C1712.8 413.9 1713.5 413.2 1714.2 412.5C1714.9 411.8 1715.6 411.1 1716.2 410.4C1716.9 409.7 1717.6 409.0 1718.3 408.3C1719.0 407.6 1719.7 406.8 1720.4 406.1C1721.1 405.4 1721.8 404.7 1722.4 404.0C1723.1 403.3 1723.8 402.6 1724.5 401.8C1725.2 401.1 1725.8 400.4 1726.5 399.7C1727.2 398.9 1727.9 398.2 1728.5 397.5C1729.2 396.7 1729.9 396.0 1730.5 395.3C1731.2 394.5 1731.9 393.8 1732.5 393.0C1733.2 392.3 1733.9 391.6 1734.5 390.8C1735.2 390.1 1735.9 389.3 1736.5 388.6C1737.2 387.8 1737.8 387.1 1738.5 386.3C1739.2 385.6 1739.8 384.8 1740.5 384.0C1741.1 383.3 1741.8 382.5 1742.4 381.8C1743.1 381.0 1743.8 380.2 1744.4 379.5C1745.1 378.7 1745.7 377.9 1746.4 377.2C1747.0 376.4 1747.7 375.6 1748.3 374.8C1749.0 374.1 1749.7 373.3 1750.3 372.5C1751.0 371.7 1751.6 370.9 1752.3 370.2C1752.9 369.4 1753.6 368.6 1754.2 367.8C1754.9 367.0 1755.6 366.2 1756.2 365.4C1756.9 364.7 1757.5 363.9 1758.2 363.1C1758.8 362.3 1759.5 361.5 1760.2 360.7C1760.8 359.9 1761.5 359.1 1762.2 358.3C1762.8 357.5 1763.5 356.7 1764.2 356.0C1764.9 355.2 1765.5 354.4 1766.2 353.7C1766.9 352.9 1767.6 352.2 1768.3 351.4C1769.0 350.7 1769.7 350.0 1770.4 349.3C1771.2 348.6 1771.9 347.9 1772.6 347.2C1773.3 346.5 1774.1 345.9 1774.8 345.2C1775.6 344.6 1776.4 344.0 1777.1 343.4C1777.9 342.8 1778.7 342.2 1779.5 341.7C1780.3 341.2 1781.1 340.6 1782.0 340.2C1782.8 339.7 1783.6 339.2 1784.5 338.8C1785.3 338.3 1786.2 337.9 1787.1 337.6C1788.0 337.2 1788.9 336.9 1789.8 336.6C1790.8 336.3 1791.7 336.0 1792.7 335.8C1793.6 335.6 1794.6 335.4 1795.6 335.2C1796.6 335.1 1797.6 334.9 1798.5 334.8C1799.5 334.8 1800.6 334.7 1801.6 334.7C1802.6 334.6 1803.6 334.7 1804.6 334.7C1805.6 334.7 1806.6 334.8 1807.7 334.9C1808.7 335.0 1809.7 335.1 1810.7 335.3C1811.7 335.4 1812.7 335.6 1813.7 335.8C1814.7 336.1 1815.7 336.3 1816.6 336.6C1817.6 336.8 1818.6 337.1 1819.5 337.5C1820.5 337.8 1821.4 338.2 1822.3 338.5C1823.2 338.9 1824.1 339.3 1825.0 339.7C1825.9 340.2 1826.8 340.6 1827.6 341.1C1828.5 341.6 1829.3 342.0 1830.2 342.6C1831.0 343.1 1831.9 343.6 1832.7 344.1C1833.5 344.7 1834.3 345.3 1835.1 345.8C1835.9 346.4 1836.7 347.0 1837.5 347.6C1838.2 348.3 1839.0 348.9 1839.8 349.5C1840.5 350.2 1841.3 350.8 1842.1 351.5C1842.8 352.1 1843.6 352.8 1844.3 353.5C1845.0 354.2 1845.8 354.9 1846.5 355.6C1847.2 356.3 1848.0 357.0 1848.7 357.7C1849.4 358.4 1850.1 359.1 1850.9 359.9C1851.6 360.6 1852.3 361.3 1853.0 362.0C1853.7 362.8 1854.4 363.5 1855.2 364.2C1855.9 365.0 1856.6 365.7 1857.3 366.4C1858.0 367.1 1858.7 367.9 1859.5 368.6C1860.2 369.3 1860.9 370.0 1861.6 370.8C1862.4 371.5 1863.1 372.2 1863.8 372.9C1864.6 373.6 1865.3 374.3 1866.0 375.0C1866.8 375.7 1867.5 376.4 1868.3 377.0C1869.0 377.7 1869.8 378.4 1870.5 379.0C1871.3 379.7 1872.1 380.3 1872.8 381.0C1873.6 381.6 1874.4 382.3 1875.1 382.9C1875.9 383.5 1876.7 384.2 1877.5 384.8C1878.3 385.4 1879.1 386.0 1879.8 386.6C1880.6 387.2 1881.4 387.8 1882.2 388.4C1883.0 389.0 1883.8 389.6 1884.6 390.2C1885.4 390.8 1886.2 391.4 1887.0 392.0C1887.8 392.6 1888.6 393.1 1889.4 393.7C1890.3 394.3 1891.1 394.9 1891.9 395.4C1892.7 396.0 1893.5 396.6 1894.3 397.1C1895.1 397.7 1896.0 398.3 1896.8 398.8C1897.6 399.4 1898.4 400.0 1899.2 400.5C1900.0 401.1 1900.9 401.6 1901.7 402.2C1902.5 402.8 1903.3 403.3 1904.1 403.9C1905.0 404.5 1905.8 405.0 1906.6 405.6C1907.4 406.1 1908.2 406.7 1909.1 407.3C1909.9 407.8 1910.7 408.4 1911.5 409.0C1912.3 409.5 1913.1 410.1 1914.0 410.7C1914.8 411.2 1915.6 411.8 1916.4 412.4C1917.2 413.0 1918.0 413.5 1918.8 414.1C1919.6 414.7 1920.4 415.3 1921.2 415.9C1922.0 416.5 1922.8 417.1 1923.6 417.7C1924.4 418.3 1925.2 418.9 1926.0 419.5C1926.8 420.1 1927.6 420.7 1928.4 421.3C1929.2 421.9 1930.0 422.5 1930.8 423.1C1931.6 423.8 1932.4 424.4 1933.1 425.0C1933.9 425.6 1934.7 426.2 1935.5 426.9C1936.3 427.5 1937.1 428.1 1937.8 428.8C1938.6 429.4 1939.4 430.0 1940.2 430.7C1940.9 431.3 1941.7 432.0 1942.5 432.6C1943.2 433.2 1944.0 433.9 1944.8 434.5C1945.6 435.2 1946.3 435.8 1947.1 436.5C1947.8 437.1 1948.6 437.8 1949.4 438.5C1950.1 439.1 1950.9 439.8 1951.6 440.4C1952.4 441.1 1953.2 441.8 1953.9 442.4C1954.7 443.1 1955.4 443.8 1956.2 444.4C1956.9 445.1 1957.7 445.8 1958.4 446.4C1959.2 447.1 1959.9 447.8 1960.7 448.5C1961.4 449.1 1962.1 449.8 1962.9 450.5C1963.6 451.2 1964.4 451.8 1965.1 452.5C1965.8 453.2 1966.6 453.9 1967.3 454.6C1968.1 455.2 1968.8 455.9 1969.5 456.6C1970.3 457.3 1971.0 458.0 1971.7 458.7C1972.5 459.4 1973.2 460.0 1973.9 460.7C1974.6 461.4 1975.4 462.1 1976.1 462.8C1976.8 463.5 1977.5 464.2 1978.3 464.9C1979.0 465.6 1979.7 466.3 1980.4 467.0C1981.1 467.7 1981.9 468.4 1982.6 469.1C1983.3 469.8 1984.0 470.5 1984.7 471.2C1985.4 471.9 1986.1 472.6 1986.9 473.3C1987.6 474.0 1988.3 474.7 1989.0 475.4C1989.7 476.1 1990.4 476.8 1991.1 477.5C1991.8 478.2 1992.5 478.9 1993.2 479.6C1993.9 480.4 1994.6 481.1 1995.3 481.8C1996.0 482.5 1996.6 483.2 1997.3 484.0C1998.0 484.7 1998.7 485.4 1999.4 486.1C2000.1 486.9 2000.8 487.6 2001.4 488.3C2002.1 489.0 2002.8 489.8 2003.5 490.5C2004.1 491.3 2004.8 492.0 2005.5 492.7C2006.2 493.5 2006.8 494.2 2007.5 495.0C2008.2 495.7 2008.8 496.4 2009.5 497.2C2010.1 497.9 2010.8 498.7 2011.4 499.4C2012.1 500.2 2012.8 501.0 2013.4 501.7C2014.1 502.5 2014.7 503.2 2015.3 504.0C2016.0 504.8 2016.6 505.5 2017.3 506.3C2017.9 507.1 2018.5 507.8 2019.2 508.6C2019.8 509.4 2020.4 510.2 2021.1 510.9C2021.7 511.7 2022.3 512.5 2023.0 513.3C2023.6 514.1 2024.2 514.8 2024.9 515.6C2025.5 516.4 2026.1 517.2 2026.8 517.9C2027.4 518.7 2028.1 519.5 2028.7 520.2C2029.4 521.0 2030.1 521.7 2030.8 522.5C2031.4 523.2 2032.1 523.9 2032.8 524.6C2033.5 525.4 2034.2 526.1 2035.0 526.8C2035.7 527.5 2036.5 528.2 2037.2 528.8C2038.0 529.5 2038.8 530.2 2039.6 530.8C2040.4 531.4 2041.2 532.1 2042.0 532.6C2042.8 533.2 2043.7 533.8 2044.6 534.3C2045.4 534.8 2046.3 535.2 2047.2 535.6C2048.2 536.0 2049.1 536.4 2050.0 536.6C2051.0 536.9 2052.0 537.1 2052.9 537.2C2053.9 537.4 2054.9 537.4 2055.9 537.4C2057.0 537.4 2058.0 537.3 2059.0 537.2C2059.9 537.1 2060.9 536.9 2061.9 536.6C2062.8 536.3 2063.8 536.0 2064.7 535.6C2065.6 535.3 2066.4 534.8 2067.3 534.4C2068.2 533.9 2069.0 533.4 2069.9 532.9C2070.7 532.4 2071.5 531.9 2072.4 531.3C2073.2 530.8 2074.1 530.3 2075.0 529.7C2075.8 529.2 2076.7 528.7 2077.6 528.2C2078.5 527.7 2079.5 527.3 2080.4 526.8C2081.4 526.4 2082.4 526.0 2083.4 525.7C2084.4 525.4 2085.4 525.1 2086.4 524.9C2087.4 524.8 2088.4 524.7 2089.4 524.6C2090.4 524.6 2091.3 524.7 2092.3 524.9C2093.2 525.1 2094.2 525.3 2095.1 525.7C2096.0 526.0 2096.9 526.4 2097.7 526.9C2098.6 527.4 2099.4 528.0 2100.3 528.6C2101.1 529.1 2101.9 529.8 2102.6 530.5C2103.4 531.1 2104.1 531.9 2104.8 532.6C2105.5 533.3 2106.2 534.1 2106.8 534.9C2107.4 535.6 2108.1 536.4 2108.6 537.2C2109.2 538.0 2109.8 538.8 2110.3 539.7C2110.9 540.5 2111.4 541.3 2111.9 542.2C2112.4 543.0 2112.9 543.9 2113.4 544.8C2113.8 545.7 2114.3 546.5 2114.7 547.4C2115.2 548.3 2115.6 549.2 2116.1 550.1C2116.5 551.0 2116.9 551.9 2117.4 552.8C2117.8 553.7 2118.2 554.6 2118.6 555.5C2119.1 556.4 2119.5 557.4 2119.9 558.3C2120.4 559.2 2120.8 560.1 2121.3 561.0C2121.7 561.9 2122.2 562.8 2122.6 563.7C2123.1 564.6 2123.5 565.5 2124.0 566.3C2124.5 567.2 2125.0 568.1 2125.4 569.0C2125.9 569.9 2126.4 570.8 2126.9 571.7C2127.3 572.6 2127.8 573.5 2128.3 574.3C2128.8 575.2 2129.3 576.1 2129.8 577.0C2130.2 577.9 2130.7 578.8 2131.2 579.7C2131.7 580.6 2132.2 581.4 2132.6 582.3C2133.1 583.2 2133.6 584.1 2134.1 585.0C2134.5 585.9 2135.0 586.8 2135.5 587.7C2135.9 588.6 2136.4 589.5 2136.8 590.4C2137.3 591.3 2137.8 592.2 2138.2 593.1C2138.7 594.0 2139.1 594.9 2139.5 595.8C2140.0 596.7 2140.4 597.6 2140.8 598.5C2141.3 599.4 2141.7 600.3 2142.1 601.2C2142.6 602.1 2143.0 603.0 2143.4 603.9C2143.8 604.8 2144.2 605.7 2144.6 606.6C2145.0 607.6 2145.4 608.5 2145.8 609.4C2146.2 610.3 2146.6 611.2 2147.0 612.1C2147.4 613.1 2147.8 614.0 2148.2 614.9C2148.6 615.8 2149.0 616.7 2149.4 617.7C2149.7 618.6 2150.1 619.5 2150.5 620.4C2150.9 621.4 2151.2 622.3 2151.6 623.2C2152.0 624.1 2152.3 625.1 2152.7 626.0C2153.1 626.9 2153.4 627.9 2153.8 628.8C2154.1 629.7 2154.5 630.7 2154.8 631.6C2155.2 632.5 2155.5 633.5 2155.8 634.4C2156.2 635.3 2156.5 636.3 2156.9 637.2C2157.2 638.2 2157.5 639.1 2157.9 640.0C2158.2 641.0 2158.5 641.9 2158.8 642.9C2159.2 643.8 2159.5 644.8 2159.8 645.7C2160.1 646.7 2160.4 647.6 2160.7 648.5C2161.1 649.5 2161.4 650.4 2161.7 651.4C2162.0 652.3 2162.3 653.3 2162.6 654.2C2162.9 655.2 2163.2 656.1 2163.5 657.1C2163.8 658.1 2164.1 659.0 2164.4 660.0C2164.6 660.9 2164.9 661.9 2165.2 662.8C2165.5 663.8 2165.8 664.7 2166.1 665.7C2166.3 666.7 2166.6 667.6 2166.9 668.6C2167.2 669.5 2167.4 670.5 2167.7 671.5C2168.0 672.4 2168.3 673.4 2168.5 674.3C2168.8 675.3 2169.1 676.3 2169.3 677.2C2169.6 678.2 2169.8 679.2 2170.1 680.1C2170.4 681.1 2170.6 682.1 2170.9 683.0C2171.1 684.0 2171.4 685.0 2171.6 685.9C2171.9 686.9 2172.1 687.9 2172.4 688.8C2172.6 689.8 2172.9 690.8 2173.1 691.8C2173.3 692.7 2173.6 693.7 2173.8 694.7C2174.1 695.6 2174.3 696.6 2174.5 697.6C2174.8 698.6 2175.0 699.5 2175.2 700.5C2175.5 701.5 2175.7 702.5 2175.9 703.4C2176.2 704.4 2176.4 705.4 2176.6 706.4C2176.8 707.3 2177.1 708.3 2177.3 709.3C2177.5 710.3 2177.7 711.3 2177.9 712.2C2178.2 713.2 2178.4 714.2 2178.6 715.2C2178.8 716.1 2179.0 717.1 2179.2 718.1C2179.5 719.1 2179.7 720.1 2179.9 721.0C2180.1 722.0 2180.3 723.0 2180.5 724.0C2180.7 725.0 2180.9 726.0 2181.1 726.9C2181.3 727.9 2181.6 728.9 2181.8 729.9C2182.0 730.9 2182.2 731.8 2182.4 732.8C2182.6 733.8 2182.8 734.8 2183.0 735.8C2183.2 736.8 2183.4 737.7 2183.6 738.7C2183.8 739.7 2184.0 740.7 2184.2 741.7C2184.4 742.7 2184.6 743.7 2184.8 744.6C2185.0 745.6 2185.2 746.6 2185.3 747.6C2185.5 748.6 2185.7 749.6 2185.9 750.5C2186.1 751.5 2186.3 752.5 2186.5 753.5C2186.7 754.5 2186.9 755.5 2187.1 756.5C2187.3 757.4 2187.5 758.4 2187.7 759.4C2187.9 760.4 2188.0 761.4 2188.2 762.4C2188.4 763.4 2188.6 764.4 2188.8 765.3C2189.0 766.3 2189.2 767.3 2189.4 768.3C2189.6 769.3 2189.7 770.3 2189.9 771.3C2190.1 772.2 2190.3 773.2 2190.5 774.2C2190.7 775.2 2190.9 776.2 2191.1 777.2C2191.2 778.2 2191.4 779.1 2191.6 780.1C2191.8 781.1 2192.0 782.1 2192.2 783.1C2192.4 784.1 2192.6 785.0 2192.8 786.0C2192.9 787.0 2193.1 788.0 2193.3 789.0C2193.5 790.0 2193.7 791.0 2193.9 791.9C2194.1 792.9 2194.3 793.9 2194.5 794.9C2194.6 795.9 2194.8 796.9 2195.0 797.8C2195.2 798.8 2195.4 799.8 2195.6 800.8C2195.8 801.8 2196.0 802.7 2196.2 803.7C2196.4 804.7 2196.6 805.7 2196.7 806.7C2196.9 807.7 2197.1 808.6 2197.3 809.6C2197.5 810.6 2197.7 811.6 2197.9 812.6C2198.1 813.5 2198.3 814.5 2198.5 815.5C2198.7 816.5 2198.9 817.5 2199.1 818.4C2199.3 819.4 2199.5 820.4 2199.7 821.4C2199.9 822.4 2200.1 823.3 2200.3 824.3C2200.5 825.3 2200.7 826.3 2200.8 827.3C2201.0 828.2 2201.2 829.2 2201.4 830.2C2201.6 831.2 2201.8 832.1 2202.0 833.1C2202.2 834.1 2202.4 835.1 2202.6 836.1C2202.8 837.0 2203.0 838.0 2203.2 839.0C2203.4 840.0 2203.6 841.0 2203.8 841.9C2204.0 842.9 2204.2 843.9 2204.4 844.9C2204.6 845.8 2204.8 846.8 2205.0 847.8C2205.2 848.8 2205.4 849.8 2205.6 850.7C2205.8 851.7 2206.0 852.7 2206.2 853.7C2206.4 854.7 2206.6 855.6 2206.8 856.6C2207.0 857.6 2207.2 858.6 2207.4 859.5C2207.6 860.5 2207.8 861.5 2208.0 862.5C2208.2 863.5 2208.4 864.4 2208.6 865.4C2208.8 866.4 2209.0 867.4 2209.2 868.4C2209.4 869.3 2209.6 870.3 2209.8 871.3C2210.0 872.3 2210.2 873.3 2210.4 874.2C2210.6 875.2 2210.8 876.2 2211.0 877.2C2211.3 878.2 2211.5 879.1 2211.7 880.1C2211.9 881.1 2212.1 882.1 2212.3 883.1C2212.5 884.1 2212.7 885.0 2212.9 886.0C2213.1 887.0 2213.3 888.0 2213.5 889.0C2213.7 890.0 2213.9 890.9 2214.1 891.9C2214.3 892.9 2214.5 893.9 2214.7 894.9C2214.9 895.9 2215.1 896.8 2215.3 897.8C2215.5 898.8 2215.7 899.8 2215.9 900.8C2216.1 901.8 2216.3 902.7 2216.5 903.7C2216.7 904.7 2216.9 905.7 2217.1 906.7C2217.3 907.7 2217.6 908.6 2217.8 909.6C2218.0 910.6 2218.2 911.6 2218.4 912.6C2218.7 913.5 2218.9 914.5 2219.1 915.5C2219.4 916.5 2219.6 917.4 2219.9 918.4C2220.1 919.4 2220.4 920.3 2220.6 921.3C2220.9 922.3 2221.1 923.2 2221.4 924.2C2221.7 925.2 2221.9 926.1 2222.2 927.1C2222.5 928.0 2222.8 929.0 2223.1 930.0C2223.4 930.9 2223.7 931.9 2224.0 932.8C2224.3 933.8 2224.6 934.7 2225.0 935.7C2225.3 936.6 2225.6 937.5 2226.0 938.5C2226.3 939.4 2226.7 940.3 2227.1 941.3C2227.4 942.2 2227.8 943.1 2228.2 944.0C2228.6 945.0 2229.0 945.9 2229.4 946.8C2229.8 947.7 2230.2 948.6 2230.6 949.5C2231.1 950.4 2231.5 951.3 2232.0 952.2C2232.4 953.1 2232.9 954.0 2233.4 954.9C2233.9 955.8 2234.4 956.7 2234.9 957.6C2235.4 958.4 2235.9 959.3 2236.5 960.2C2237.0 961.1 2237.5 961.9 2238.1 962.8C2238.7 963.6 2239.3 964.4 2239.9 965.2C2240.5 966.0 2241.2 966.7 2241.9 967.4C2242.6 968.0 2243.3 968.6 2244.1 969.2C2244.9 969.7 2245.8 970.1 2246.7 970.4C2247.6 970.8 2248.5 971.0 2249.5 971.1C2250.5 971.2 2251.6 971.2 2252.7 971.1C2253.7 971.0 2254.9 970.8 2255.9 970.5C2257.0 970.2 2258.0 969.9 2259.0 969.5C2259.9 969.1 2260.8 968.6 2261.7 968.1C2262.5 967.5 2263.3 967.0 2264.0 966.4C2264.8 965.8 2265.4 965.1 2266.1 964.4C2266.8 963.8 2267.4 963.0 2268.0 962.3C2268.6 961.6 2269.2 960.9 2269.9 960.1C2270.5 959.4 2271.1 958.6 2271.8 957.9C2272.5 957.1 2273.2 956.4 2274.0 955.6C2274.7 954.9 2275.5 954.2 2276.4 953.5C2277.2 952.8 2278.2 952.2 2279.1 951.6C2280.0 951.0 2281.0 950.4 2281.9 949.9C2282.9 949.5 2283.9 949.0 2284.8 948.7C2285.8 948.4 2286.7 948.2 2287.6 948.1C2288.5 948.0 2289.4 948.0 2290.3 948.1C2291.1 948.3 2291.9 948.5 2292.7 948.9C2293.5 949.2 2294.2 949.7 2294.9 950.2C2295.7 950.8 2296.4 951.4 2297.0 952.1C2297.7 952.8 2298.4 953.5 2299.0 954.3C2299.7 955.1 2300.3 956.0 2300.9 956.8C2301.5 957.7 2302.1 958.6 2302.8 959.5C2303.4 960.4 2304.0 961.4 2304.6 962.3C2305.2 963.2 2305.9 964.1 2306.5 965.0C2307.1 965.9 2307.8 966.8 2308.4 967.7C2309.1 968.5 2309.8 969.3 2310.5 970.0C2311.2 970.8 2311.9 971.5 2312.7 972.1C2313.4 972.7 2314.2 973.3 2315.0 973.7C2315.9 974.1 2316.7 974.5 2317.6 974.8C2318.5 975.0 2319.4 975.2 2320.3 975.3C2321.2 975.4 2322.2 975.4 2323.1 975.3C2324.0 975.2 2325.0 975.0 2325.9 974.8C2326.8 974.5 2327.7 974.2 2328.6 973.8C2329.5 973.4 2330.4 972.9 2331.2 972.4C2332.1 971.9 2332.9 971.3 2333.7 970.7C2334.5 970.0 2335.3 969.3 2336.0 968.6C2336.8 967.9 2337.5 967.2 2338.3 966.4C2339.0 965.6 2339.7 964.8 2340.4 964.1C2341.1 963.3 2341.8 962.5 2342.5 961.7C2343.2 960.9 2343.9 960.1 2344.5 959.3C2345.2 958.6 2345.9 957.8 2346.5 957.1C2347.2 956.4 2347.8 955.7 2348.5 955.0C2349.1 954.4 2349.8 953.7 2350.5 953.0C2351.1 952.3 2351.8 951.7 2352.5 951.0C2353.2 950.3 2353.9 949.6 2354.7 948.8C2355.4 948.1 2356.2 947.4 2357.0 946.7C2357.8 946.1 2358.7 945.4 2359.6 944.9C2360.5 944.5 2361.6 944.0 2362.6 943.9C2363.6 943.7 2364.6 943.7 2365.5 944.0C2366.4 944.2 2367.2 944.8 2367.9 945.4C2368.6 946.0 2369.3 946.9 2369.9 947.7C2370.6 948.4 2371.1 949.3 2371.7 950.1C2372.2 950.9 2372.7 951.8 2373.2 952.7C2373.7 953.6 2374.1 954.5 2374.5 955.4C2374.9 956.3 2375.3 957.2 2375.6 958.1C2376.0 959.1 2376.3 960.0 2376.6 961.0C2376.9 961.9 2377.2 962.9 2377.4 963.9C2377.7 964.9 2378.0 965.8 2378.2 966.8C2378.4 967.8 2378.7 968.8 2378.9 969.8C2379.1 970.8 2379.3 971.7 2379.6 972.7C2379.8 973.7 2380.0 974.7 2380.2 975.7C2380.4 976.7 2380.6 977.7 2380.8 978.7C2381.0 979.6 2381.2 980.6 2381.4 981.6C2381.6 982.6 2381.8 983.6 2382.0 984.6C2382.2 985.6 2382.4 986.5 2382.6 987.5C2382.8 988.5 2383.0 989.5 2383.1 990.5C2383.3 991.5 2383.5 992.5 2383.7 993.4C2383.8 994.4 2384.0 995.4 2384.2 996.4C2384.4 997.4 2384.5 998.4 2384.7 999.4C2384.9 1000.3 2385.0 1001.3 2385.2 1002.3C2385.4 1003.3 2385.5 1004.3 2385.7 1005.3C2385.8 1006.3 2386.0 1007.2 2386.2 1008.2C2386.3 1009.2 2386.5 1010.2 2386.6 1011.2C2386.8 1012.2 2386.9 1013.2 2387.1 1014.1C2387.3 1015.1 2387.4 1016.1 2387.6 1017.1C2387.7 1018.1 2387.9 1019.1 2388.0 1020.1C2388.2 1021.1 2388.3 1022.1 2388.5 1023.0C2388.6 1024.0 2388.8 1025.0 2388.9 1026.0C2389.1 1027.0 2389.2 1028.0 2389.3 1029.0C2389.5 1030.0 2389.6 1031.0 2389.8 1031.9C2389.9 1032.9 2390.1 1033.9 2390.2 1034.9C2390.3 1035.9 2390.5 1036.9 2390.6 1037.9C2390.8 1038.9 2390.9 1039.9 2391.0 1040.9C2391.2 1041.8 2391.3 1042.8 2391.4 1043.8C2391.6 1044.8 2391.7 1045.8 2391.8 1046.8C2392.0 1047.8 2392.1 1048.8 2392.2 1049.8C2392.4 1050.8 2392.5 1051.8 2392.6 1052.7C2392.8 1053.7 2392.9 1054.7 2393.0 1055.7C2393.2 1056.7 2393.3 1057.7 2393.4 1058.7C2393.5 1059.7 2393.7 1060.7 2393.8 1061.7C2393.9 1062.7 2394.0 1063.7 2394.2 1064.7C2394.3 1065.7 2394.4 1066.6 2394.5 1067.6C2394.6 1068.6 2394.8 1069.6 2394.9 1070.6C2395.0 1071.6 2395.1 1072.6 2395.3 1073.6C2395.4 1074.6 2395.5 1075.6 2395.6 1076.6C2395.7 1077.6 2395.8 1078.6 2396.0 1079.6C2396.1 1080.6 2396.2 1081.6 2396.3 1082.5C2396.4 1083.5 2396.5 1084.5 2396.7 1085.5C2396.8 1086.5 2396.9 1087.5 2397.0 1088.5C2397.1 1089.5 2397.2 1090.5 2397.3 1091.5C2397.4 1092.5 2397.6 1093.5 2397.7 1094.5C2397.8 1095.5 2397.9 1096.5 2398.0 1097.5C2398.1 1098.5 2398.2 1099.5 2398.3 1100.5C2398.4 1101.5 2398.5 1102.5 2398.6 1103.4C2398.8 1104.4 2398.9 1105.4 2399.0 1106.4C2399.1 1107.4 2399.2 1108.4 2399.3 1109.4C2399.4 1110.4 2399.5 1111.4 2399.6 1112.4C2399.7 1113.4 2399.8 1114.4 2399.9 1115.4C2400.0 1116.4 2400.1 1117.4 2400.2 1118.4C2400.3 1119.4 2400.4 1120.4 2400.5 1121.4C2400.6 1122.4 2400.7 1123.4 2400.8 1124.4C2400.9 1125.4 2401.0 1126.4 2401.1 1127.4C2401.2 1128.4 2401.3 1129.4 2401.4 1130.4C2401.5 1131.3 2401.6 1132.3 2401.7 1133.3C2401.8 1134.3 2401.9 1135.3 2402.0 1136.3C2402.1 1137.3 2402.2 1138.3 2402.3 1139.3C2402.4 1140.3 2402.5 1141.3 2402.6 1142.3C2402.7 1143.3 2402.8 1144.3 2402.9 1145.3C2403.0 1146.3 2403.1 1147.3 2403.2 1148.3C2403.3 1149.3 2403.4 1150.3 2403.5 1151.3C2403.6 1152.3 2403.6 1153.3 2403.7 1154.3C2403.8 1155.3 2403.9 1156.3 2404.0 1157.3C2404.1 1158.3 2404.2 1159.3 2404.3 1160.3C2404.4 1161.3 2404.5 1162.3 2404.6 1163.3C2404.7 1164.3 2404.8 1165.3 2404.9 1166.3C2405.0 1167.3 2405.0 1168.3 2405.1 1169.3C2405.2 1170.2 2405.3 1171.2 2405.4 1172.2C2405.5 1173.2 2405.6 1174.2 2405.7 1175.2C2405.8 1176.2 2405.9 1177.2 2406.0 1178.2C2406.1 1179.2 2406.2 1180.2 2406.2 1181.2C2406.3 1182.2 2406.4 1183.2 2406.5 1184.2C2406.6 1185.2 2406.7 1186.2 2406.8 1187.2C2406.9 1188.2 2407.0 1189.2 2407.1 1190.2C2407.2 1191.2 2407.2 1192.2 2407.3 1193.2C2407.4 1194.2 2407.5 1195.2 2407.6 1196.2C2407.7 1197.2 2407.8 1198.2 2407.9 1199.2C2408.0 1200.2 2408.1 1201.2 2408.2 1202.2C2408.3 1203.2 2408.3 1204.2 2408.4 1205.2C2408.5 1206.2 2408.6 1207.1 2408.7 1208.1C2408.8 1209.1 2408.9 1210.1 2409.0 1211.1C2409.1 1212.1 2409.2 1213.1 2409.3 1214.1C2409.4 1215.1 2409.4 1216.1 2409.5 1217.1C2409.6 1218.1 2409.7 1219.1 2409.8 1220.1C2409.9 1221.1 2410.0 1222.1 2410.1 1223.1C2410.2 1224.1 2410.3 1225.1 2410.4 1226.1C2410.5 1227.1 2410.6 1228.1 2410.7 1229.1C2410.7 1230.1 2410.8 1231.1 2410.9 1232.1C2411.0 1233.1 2411.1 1234.0 2411.2 1235.0C2411.3 1236.0 2411.4 1237.0 2411.5 1238.0C2411.6 1239.0 2411.7 1240.0 2411.8 1241.0C2411.9 1242.0 2412.0 1243.0 2412.1 1244.0C2412.2 1245.0 2412.3 1246.0 2412.4 1247.0C2412.5 1248.0 2412.6 1249.5 2412.6 1250.0" stroke="#1d8c2d" stroke-width="4.3"/>
</g>
<g shape-rendering="crispEdges" fill="#484848">
<rect x="86" y="37" width="2372" height="2"/>
<rect x="86" y="1229" width="2372" height="2"/>
<rect x="86" y="37" width="2" height="1194"/>
<rect x="2456" y="37" width="2" height="1194"/>
<rect x="2457" y="37" width="1" height="1" fill="#111111"/>
<rect x="2457" y="1230" width="1" height="1" fill="#111111"/>
</g>
<g font-size="25" fill="#ececec" stroke="#111111" stroke-width="0.5">
<text transform="translate(84.9,24) scale(0.855,1)" text-anchor="end">SPL</text>
<text x="84.9" y="1144" text-anchor="end">-25</text>
<text x="84.9" y="1044" text-anchor="end">-20</text>
<text x="84.9" y="945" text-anchor="end">-15</text>
<text x="84.9" y="846" text-anchor="end">-10</text>
<text x="84.9" y="746" text-anchor="end">-5</text>
<text x="84.9" y="647" text-anchor="end">0</text>
<text x="84.9" y="548" text-anchor="end">5</text>
<text x="84.9" y="448" text-anchor="end">10</text>
<text x="84.9" y="349" text-anchor="end">15</text>
<text x="84.9" y="250" text-anchor="end">20</text>
<text x="84.9" y="150" text-anchor="end">25</text>
<text x="87.2" y="1268" text-anchor="middle">20</text>
<text x="226.2" y="1268" text-anchor="middle">30</text>
<text x="325.2" y="1268" text-anchor="middle">40</text>
<text x="401.2" y="1268" text-anchor="middle">50</text>
<text x="464.2" y="1268" text-anchor="middle">60</text>
<text x="517.2" y="1268" text-anchor="middle">70</text>
<text x="563.2" y="1268" text-anchor="middle">80</text>
<text x="639.2" y="1268" text-anchor="middle">100</text>
<text x="877.2" y="1268" text-anchor="middle">200</text>
<text x="1016.2" y="1268" text-anchor="middle">300</text>
<text x="1115.2" y="1268" text-anchor="middle">400</text>
<text x="1191.2" y="1268" text-anchor="middle">500</text>
<text x="1254.2" y="1268" text-anchor="middle">600</text>
<text x="1353.2" y="1268" text-anchor="middle">800</text>
<text x="1429.2" y="1268" text-anchor="middle">1k</text>
<text x="1667.2" y="1268" text-anchor="middle">2k</text>
<text x="1806.2" y="1268" text-anchor="middle">3k</text>
<text x="1905.2" y="1268" text-anchor="middle">4k</text>
<text x="1981.2" y="1268" text-anchor="middle">5k</text>
<text x="2044.2" y="1268" text-anchor="middle">6k</text>
<text x="2097.2" y="1268" text-anchor="middle">7k</text>
<text x="2143.2" y="1268" text-anchor="middle">8k</text>
<text x="2219.2" y="1268" text-anchor="middle">10k</text>
<text x="2488.5" y="1268" text-anchor="end">20kHz</text>
</g>
<g font-size="25" fill="#8c8c8c" stroke="#111111" stroke-width="0.5">
<text x="2310.5" y="1268" text-anchor="middle">13k</text>
<text x="2381.5" y="1268" text-anchor="middle">16k</text>
</g>
<g font-size="25" fill="#e6e8e8" text-anchor="middle">
<text transform="translate(275,33) scale(0.967,1)" stroke="#8b0808" stroke-width="0.5">Sub bass</text>
<text transform="translate(708.5,33) scale(0.905,1)" stroke="#806008" stroke-width="0.5">Bass</text>
<text transform="translate(1072,33) scale(1.028,1)" stroke="#486808" stroke-width="0.5">Low mid</text>
<text transform="translate(1428.5,33) scale(1.095,1)" stroke="#086418" stroke-width="0.5">Mid</text>
<text transform="translate(1785.5,33) scale(1.045,1)" stroke="#085c54" stroke-width="0.5">Upper mid</text>
<text transform="translate(1974,33) scale(0.99,1)" stroke="#082054" stroke-width="0.5">Presence</text>
<text transform="translate(2250,33) scale(1.01,1)" stroke="#240840" stroke-width="0.5">Brilliance</text>
</g>
</svg></body></html>
